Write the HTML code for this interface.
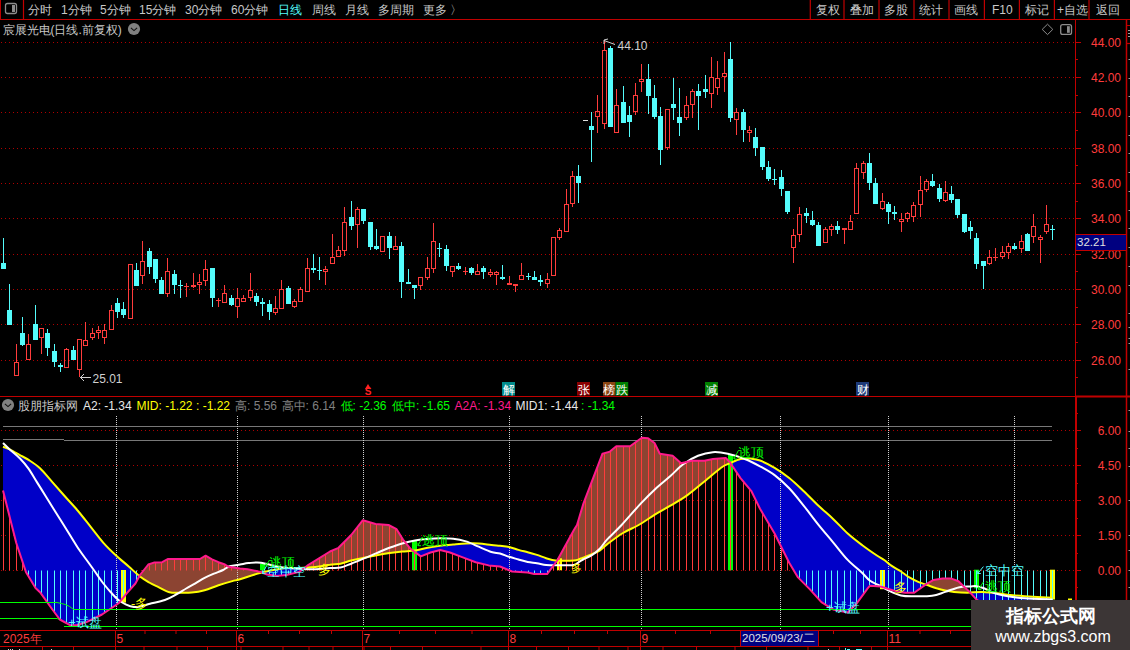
<!DOCTYPE html>
<html><head><meta charset="utf-8"><style>
html,body{margin:0;padding:0;background:#000;width:1130px;height:650px;overflow:hidden}
svg{display:block;font-family:"Liberation Sans",sans-serif}
</style></head><body>
<svg width="1130" height="650" viewBox="0 0 1130 650">
<line x1="1" y1="360.5" x2="1075" y2="360.5" stroke="#b00000" stroke-width="1" stroke-dasharray="1,3"/>
<line x1="1" y1="324.5" x2="1075" y2="324.5" stroke="#b00000" stroke-width="1" stroke-dasharray="1,3"/>
<line x1="1" y1="289.5" x2="1075" y2="289.5" stroke="#b00000" stroke-width="1" stroke-dasharray="1,3"/>
<line x1="1" y1="254.5" x2="1075" y2="254.5" stroke="#b00000" stroke-width="1" stroke-dasharray="1,3"/>
<line x1="1" y1="218.5" x2="1075" y2="218.5" stroke="#b00000" stroke-width="1" stroke-dasharray="1,3"/>
<line x1="1" y1="183.5" x2="1075" y2="183.5" stroke="#b00000" stroke-width="1" stroke-dasharray="1,3"/>
<line x1="1" y1="148.5" x2="1075" y2="148.5" stroke="#b00000" stroke-width="1" stroke-dasharray="1,3"/>
<line x1="1" y1="112.5" x2="1075" y2="112.5" stroke="#b00000" stroke-width="1" stroke-dasharray="1,3"/>
<line x1="1" y1="77.5" x2="1075" y2="77.5" stroke="#b00000" stroke-width="1" stroke-dasharray="1,3"/>
<line x1="1" y1="42.5" x2="1075" y2="42.5" stroke="#b00000" stroke-width="1" stroke-dasharray="1,3"/>
<line x1="1" y1="430.5" x2="1075" y2="430.5" stroke="#b00000" stroke-width="1" stroke-dasharray="1,3"/>
<line x1="1" y1="465.5" x2="1075" y2="465.5" stroke="#b00000" stroke-width="1" stroke-dasharray="1,3"/>
<line x1="1" y1="500.5" x2="1075" y2="500.5" stroke="#b00000" stroke-width="1" stroke-dasharray="1,3"/>
<line x1="1" y1="535.5" x2="1075" y2="535.5" stroke="#b00000" stroke-width="1" stroke-dasharray="1,3"/>
<line x1="1" y1="570.5" x2="1075" y2="570.5" stroke="#b00000" stroke-width="1" stroke-dasharray="1,3"/>
<line x1="3" y1="426.5" x2="1052" y2="426.5" stroke="#787878" stroke-width="1"/>
<line x1="3" y1="439.5" x2="64" y2="439.5" stroke="#787878" stroke-width="1"/>
<line x1="64" y1="440.5" x2="1052" y2="440.5" stroke="#787878" stroke-width="1"/>
<rect x="3" y="238" width="1" height="31" fill="#54fcfc"/>
<rect x="1" y="263" width="5" height="6" fill="#54fcfc"/>
<rect x="9" y="284" width="1" height="41" fill="#54fcfc"/>
<rect x="7" y="310" width="5" height="15" fill="#54fcfc"/>
<rect x="16" y="344" width="1" height="18" fill="#ff3c3c"/>
<rect x="14.5" y="362.5" width="4" height="13" fill="none" stroke="#ff3c3c" stroke-width="1"/>
<rect x="22" y="317" width="1" height="29" fill="#54fcfc"/>
<rect x="20" y="333" width="5" height="12" fill="#54fcfc"/>
<rect x="28" y="334" width="1" height="10" fill="#ff3c3c"/>
<rect x="26.5" y="344.5" width="4" height="15" fill="none" stroke="#ff3c3c" stroke-width="1"/>
<rect x="35" y="305" width="1" height="35" fill="#54fcfc"/>
<rect x="33" y="324" width="5" height="16" fill="#54fcfc"/>
<rect x="41" y="338" width="1" height="16" fill="#ff3c3c"/>
<rect x="39.5" y="328.5" width="4" height="9" fill="none" stroke="#ff3c3c" stroke-width="1"/>
<rect x="47" y="329" width="1" height="27" fill="#54fcfc"/>
<rect x="45" y="333" width="5" height="15" fill="#54fcfc"/>
<rect x="54" y="344" width="1" height="23" fill="#54fcfc"/>
<rect x="52" y="351" width="5" height="11" fill="#54fcfc"/>
<rect x="60" y="363" width="1" height="9" fill="#54fcfc"/>
<rect x="58" y="365" width="5" height="2" fill="#54fcfc"/>
<rect x="66" y="348" width="1" height="1" fill="#ff3c3c"/>
<rect x="64.5" y="349.5" width="4" height="18" fill="none" stroke="#ff3c3c" stroke-width="1"/>
<rect x="73" y="346" width="1" height="14" fill="#54fcfc"/>
<rect x="71" y="350" width="5" height="10" fill="#54fcfc"/>
<rect x="79" y="370" width="1" height="7" fill="#ff3c3c"/>
<rect x="77.5" y="339.5" width="4" height="30" fill="none" stroke="#ff3c3c" stroke-width="1"/>
<rect x="85" y="322" width="1" height="18" fill="#ff3c3c"/>
<rect x="83.5" y="340.5" width="4" height="5" fill="none" stroke="#ff3c3c" stroke-width="1"/>
<rect x="92" y="328" width="1" height="5" fill="#ff3c3c"/>
<rect x="92" y="338" width="1" height="2" fill="#ff3c3c"/>
<rect x="90.5" y="333.5" width="4" height="4" fill="none" stroke="#ff3c3c" stroke-width="1"/>
<rect x="98" y="326" width="1" height="4" fill="#ff3c3c"/>
<rect x="98" y="333" width="1" height="6" fill="#ff3c3c"/>
<rect x="96.5" y="330.5" width="4" height="2" fill="none" stroke="#ff3c3c" stroke-width="1"/>
<rect x="104" y="324" width="1" height="6" fill="#ff3c3c"/>
<rect x="104" y="338" width="1" height="6" fill="#ff3c3c"/>
<rect x="102.5" y="330.5" width="4" height="7" fill="none" stroke="#ff3c3c" stroke-width="1"/>
<rect x="111" y="305" width="1" height="5" fill="#ff3c3c"/>
<rect x="109.5" y="310.5" width="4" height="19" fill="none" stroke="#ff3c3c" stroke-width="1"/>
<rect x="117" y="298" width="1" height="20" fill="#54fcfc"/>
<rect x="115" y="303" width="5" height="9" fill="#54fcfc"/>
<rect x="123" y="302" width="1" height="16" fill="#54fcfc"/>
<rect x="121" y="309" width="5" height="6" fill="#54fcfc"/>
<rect x="128.5" y="264.5" width="4" height="54" fill="none" stroke="#ff3c3c" stroke-width="1"/>
<rect x="136" y="263" width="1" height="23" fill="#54fcfc"/>
<rect x="134" y="270" width="5" height="16" fill="#54fcfc"/>
<rect x="142" y="241" width="1" height="20" fill="#ff3c3c"/>
<rect x="142" y="276" width="1" height="8" fill="#ff3c3c"/>
<rect x="140.5" y="261.5" width="4" height="14" fill="none" stroke="#ff3c3c" stroke-width="1"/>
<rect x="149" y="248" width="1" height="26" fill="#54fcfc"/>
<rect x="147" y="251" width="5" height="16" fill="#54fcfc"/>
<rect x="155" y="259" width="1" height="24" fill="#54fcfc"/>
<rect x="153" y="259" width="5" height="20" fill="#54fcfc"/>
<rect x="161" y="277" width="1" height="17" fill="#54fcfc"/>
<rect x="159" y="280" width="5" height="14" fill="#54fcfc"/>
<rect x="167" y="258" width="1" height="13" fill="#ff3c3c"/>
<rect x="167" y="294" width="1" height="3" fill="#ff3c3c"/>
<rect x="165.5" y="271.5" width="4" height="22" fill="none" stroke="#ff3c3c" stroke-width="1"/>
<rect x="174" y="270" width="1" height="24" fill="#54fcfc"/>
<rect x="172" y="274" width="5" height="11" fill="#54fcfc"/>
<rect x="180" y="280" width="1" height="18" fill="#54fcfc"/>
<rect x="178" y="285" width="5" height="1" fill="#54fcfc"/>
<rect x="186" y="283" width="1" height="3" fill="#ff3c3c"/>
<rect x="186" y="287" width="1" height="10" fill="#ff3c3c"/>
<rect x="184" y="286" width="5" height="1" fill="#ff3c3c"/>
<rect x="193" y="273" width="1" height="12" fill="#ff3c3c"/>
<rect x="193" y="287" width="1" height="1" fill="#ff3c3c"/>
<rect x="191" y="285" width="5" height="2" fill="#ff3c3c"/>
<rect x="199" y="274" width="1" height="8" fill="#ff3c3c"/>
<rect x="199" y="285" width="1" height="9" fill="#ff3c3c"/>
<rect x="197.5" y="282.5" width="4" height="2" fill="none" stroke="#ff3c3c" stroke-width="1"/>
<rect x="205" y="260" width="1" height="9" fill="#ff3c3c"/>
<rect x="205" y="281" width="1" height="5" fill="#ff3c3c"/>
<rect x="203.5" y="269.5" width="4" height="11" fill="none" stroke="#ff3c3c" stroke-width="1"/>
<rect x="212" y="268" width="1" height="39" fill="#54fcfc"/>
<rect x="210" y="268" width="5" height="30" fill="#54fcfc"/>
<rect x="218" y="298" width="1" height="2" fill="#ff3c3c"/>
<rect x="218" y="301" width="1" height="6" fill="#ff3c3c"/>
<rect x="216" y="300" width="5" height="1" fill="#ff3c3c"/>
<rect x="224" y="285" width="1" height="8" fill="#ff3c3c"/>
<rect x="222.5" y="293.5" width="4" height="9" fill="none" stroke="#ff3c3c" stroke-width="1"/>
<rect x="231" y="295" width="1" height="11" fill="#54fcfc"/>
<rect x="229" y="298" width="5" height="7" fill="#54fcfc"/>
<rect x="237" y="288" width="1" height="10" fill="#ff3c3c"/>
<rect x="237" y="307" width="1" height="11" fill="#ff3c3c"/>
<rect x="235.5" y="298.5" width="4" height="8" fill="none" stroke="#ff3c3c" stroke-width="1"/>
<rect x="243" y="295" width="1" height="3" fill="#ff3c3c"/>
<rect x="241.5" y="298.5" width="4" height="3" fill="none" stroke="#ff3c3c" stroke-width="1"/>
<rect x="250" y="273" width="1" height="17" fill="#ff3c3c"/>
<rect x="250" y="298" width="1" height="3" fill="#ff3c3c"/>
<rect x="248.5" y="290.5" width="4" height="7" fill="none" stroke="#ff3c3c" stroke-width="1"/>
<rect x="256" y="293" width="1" height="13" fill="#54fcfc"/>
<rect x="254" y="296" width="5" height="6" fill="#54fcfc"/>
<rect x="262" y="298" width="1" height="18" fill="#54fcfc"/>
<rect x="260" y="302" width="5" height="2" fill="#54fcfc"/>
<rect x="269" y="300" width="1" height="20" fill="#54fcfc"/>
<rect x="267" y="304" width="5" height="8" fill="#54fcfc"/>
<rect x="275" y="296" width="1" height="12" fill="#ff3c3c"/>
<rect x="275" y="313" width="1" height="2" fill="#ff3c3c"/>
<rect x="273.5" y="308.5" width="4" height="4" fill="none" stroke="#ff3c3c" stroke-width="1"/>
<rect x="281" y="280" width="1" height="9" fill="#ff3c3c"/>
<rect x="279.5" y="289.5" width="4" height="19" fill="none" stroke="#ff3c3c" stroke-width="1"/>
<rect x="288" y="286" width="1" height="18" fill="#54fcfc"/>
<rect x="286" y="288" width="5" height="16" fill="#54fcfc"/>
<rect x="294" y="299" width="1" height="2" fill="#ff3c3c"/>
<rect x="294" y="307" width="1" height="1" fill="#ff3c3c"/>
<rect x="292.5" y="301.5" width="4" height="5" fill="none" stroke="#ff3c3c" stroke-width="1"/>
<rect x="300" y="287" width="1" height="2" fill="#ff3c3c"/>
<rect x="298.5" y="289.5" width="4" height="12" fill="none" stroke="#ff3c3c" stroke-width="1"/>
<rect x="307" y="258" width="1" height="10" fill="#ff3c3c"/>
<rect x="305.5" y="268.5" width="4" height="23" fill="none" stroke="#ff3c3c" stroke-width="1"/>
<rect x="313" y="254" width="1" height="19" fill="#54fcfc"/>
<rect x="311" y="268" width="5" height="2" fill="#54fcfc"/>
<rect x="319" y="257" width="1" height="23" fill="#54fcfc"/>
<rect x="317" y="270" width="5" height="1" fill="#54fcfc"/>
<rect x="325" y="266" width="1" height="3" fill="#ff3c3c"/>
<rect x="325" y="272" width="1" height="13" fill="#ff3c3c"/>
<rect x="323.5" y="269.5" width="4" height="2" fill="none" stroke="#ff3c3c" stroke-width="1"/>
<rect x="332" y="234" width="1" height="23" fill="#ff3c3c"/>
<rect x="330.5" y="257.5" width="4" height="6" fill="none" stroke="#ff3c3c" stroke-width="1"/>
<rect x="338" y="246" width="1" height="4" fill="#ff3c3c"/>
<rect x="336.5" y="250.5" width="4" height="6" fill="none" stroke="#ff3c3c" stroke-width="1"/>
<rect x="344" y="207" width="1" height="15" fill="#ff3c3c"/>
<rect x="344" y="251" width="1" height="5" fill="#ff3c3c"/>
<rect x="342.5" y="222.5" width="4" height="28" fill="none" stroke="#ff3c3c" stroke-width="1"/>
<rect x="351" y="201" width="1" height="29" fill="#54fcfc"/>
<rect x="349" y="217" width="5" height="9" fill="#54fcfc"/>
<rect x="357" y="207" width="1" height="2" fill="#ff3c3c"/>
<rect x="357" y="225" width="1" height="23" fill="#ff3c3c"/>
<rect x="355.5" y="209.5" width="4" height="15" fill="none" stroke="#ff3c3c" stroke-width="1"/>
<rect x="363" y="209" width="1" height="15" fill="#54fcfc"/>
<rect x="361" y="209" width="5" height="12" fill="#54fcfc"/>
<rect x="370" y="222" width="1" height="28" fill="#54fcfc"/>
<rect x="368" y="222" width="5" height="25" fill="#54fcfc"/>
<rect x="376" y="229" width="1" height="21" fill="#54fcfc"/>
<rect x="374" y="246" width="5" height="3" fill="#54fcfc"/>
<rect x="380.5" y="236.5" width="4" height="15" fill="none" stroke="#ff3c3c" stroke-width="1"/>
<rect x="389" y="232" width="1" height="27" fill="#54fcfc"/>
<rect x="387" y="236" width="5" height="12" fill="#54fcfc"/>
<rect x="395" y="236" width="1" height="10" fill="#ff3c3c"/>
<rect x="393.5" y="246.5" width="4" height="3" fill="none" stroke="#ff3c3c" stroke-width="1"/>
<rect x="401" y="242" width="1" height="56" fill="#54fcfc"/>
<rect x="399" y="246" width="5" height="36" fill="#54fcfc"/>
<rect x="408" y="269" width="1" height="15" fill="#54fcfc"/>
<rect x="406" y="282" width="5" height="2" fill="#54fcfc"/>
<rect x="414" y="285" width="1" height="14" fill="#54fcfc"/>
<rect x="412" y="285" width="5" height="3" fill="#54fcfc"/>
<rect x="420" y="286" width="1" height="4" fill="#ff3c3c"/>
<rect x="418.5" y="277.5" width="4" height="8" fill="none" stroke="#ff3c3c" stroke-width="1"/>
<rect x="427" y="257" width="1" height="11" fill="#ff3c3c"/>
<rect x="427" y="278" width="1" height="2" fill="#ff3c3c"/>
<rect x="425.5" y="268.5" width="4" height="9" fill="none" stroke="#ff3c3c" stroke-width="1"/>
<rect x="433" y="223" width="1" height="18" fill="#ff3c3c"/>
<rect x="433" y="269" width="1" height="4" fill="#ff3c3c"/>
<rect x="431.5" y="241.5" width="4" height="27" fill="none" stroke="#ff3c3c" stroke-width="1"/>
<rect x="439" y="243" width="1" height="14" fill="#54fcfc"/>
<rect x="437" y="248" width="5" height="1" fill="#54fcfc"/>
<rect x="446" y="245" width="1" height="26" fill="#54fcfc"/>
<rect x="444" y="249" width="5" height="17" fill="#54fcfc"/>
<rect x="452" y="272" width="1" height="5" fill="#ff3c3c"/>
<rect x="450.5" y="266.5" width="4" height="5" fill="none" stroke="#ff3c3c" stroke-width="1"/>
<rect x="458" y="263" width="1" height="7" fill="#54fcfc"/>
<rect x="456" y="266" width="5" height="3" fill="#54fcfc"/>
<rect x="465" y="267" width="1" height="4" fill="#ff3c3c"/>
<rect x="465" y="272" width="1" height="3" fill="#ff3c3c"/>
<rect x="463" y="271" width="5" height="1" fill="#ff3c3c"/>
<rect x="471" y="267" width="1" height="8" fill="#54fcfc"/>
<rect x="469" y="268" width="5" height="5" fill="#54fcfc"/>
<rect x="477" y="264" width="1" height="7" fill="#ff3c3c"/>
<rect x="475.5" y="271.5" width="4" height="3" fill="none" stroke="#ff3c3c" stroke-width="1"/>
<rect x="483" y="266" width="1" height="13" fill="#54fcfc"/>
<rect x="481" y="268" width="5" height="4" fill="#54fcfc"/>
<rect x="490" y="269" width="1" height="3" fill="#ff3c3c"/>
<rect x="490" y="275" width="1" height="2" fill="#ff3c3c"/>
<rect x="488.5" y="272.5" width="4" height="2" fill="none" stroke="#ff3c3c" stroke-width="1"/>
<rect x="496" y="271" width="1" height="1" fill="#ff3c3c"/>
<rect x="496" y="275" width="1" height="10" fill="#ff3c3c"/>
<rect x="494.5" y="272.5" width="4" height="2" fill="none" stroke="#ff3c3c" stroke-width="1"/>
<rect x="502" y="265" width="1" height="15" fill="#54fcfc"/>
<rect x="500" y="277" width="5" height="2" fill="#54fcfc"/>
<rect x="509" y="276" width="1" height="7" fill="#ff3c3c"/>
<rect x="507" y="283" width="5" height="2" fill="#ff3c3c"/>
<rect x="515" y="286" width="1" height="6" fill="#ff3c3c"/>
<rect x="513" y="284" width="5" height="2" fill="#ff3c3c"/>
<rect x="521" y="263" width="1" height="12" fill="#ff3c3c"/>
<rect x="519.5" y="275.5" width="4" height="4" fill="none" stroke="#ff3c3c" stroke-width="1"/>
<rect x="528" y="273" width="1" height="7" fill="#54fcfc"/>
<rect x="526" y="276" width="5" height="1" fill="#54fcfc"/>
<rect x="534" y="271" width="1" height="9" fill="#54fcfc"/>
<rect x="532" y="277" width="5" height="3" fill="#54fcfc"/>
<rect x="540" y="275" width="1" height="11" fill="#54fcfc"/>
<rect x="538" y="280" width="5" height="2" fill="#54fcfc"/>
<rect x="547" y="273" width="1" height="6" fill="#ff3c3c"/>
<rect x="547" y="284" width="1" height="4" fill="#ff3c3c"/>
<rect x="545.5" y="279.5" width="4" height="4" fill="none" stroke="#ff3c3c" stroke-width="1"/>
<rect x="551.5" y="237.5" width="4" height="38" fill="none" stroke="#ff3c3c" stroke-width="1"/>
<rect x="559" y="228" width="1" height="2" fill="#ff3c3c"/>
<rect x="559" y="238" width="1" height="2" fill="#ff3c3c"/>
<rect x="557.5" y="230.5" width="4" height="7" fill="none" stroke="#ff3c3c" stroke-width="1"/>
<rect x="566" y="189" width="1" height="15" fill="#ff3c3c"/>
<rect x="564.5" y="204.5" width="4" height="27" fill="none" stroke="#ff3c3c" stroke-width="1"/>
<rect x="572" y="171" width="1" height="5" fill="#ff3c3c"/>
<rect x="572" y="204" width="1" height="3" fill="#ff3c3c"/>
<rect x="570.5" y="176.5" width="4" height="27" fill="none" stroke="#ff3c3c" stroke-width="1"/>
<rect x="578" y="165" width="1" height="38" fill="#54fcfc"/>
<rect x="576" y="176" width="5" height="7" fill="#54fcfc"/>
<rect x="583" y="120" width="5" height="1" fill="#e0e0e0"/>
<rect x="591" y="112" width="1" height="50" fill="#54fcfc"/>
<rect x="589" y="126" width="5" height="4" fill="#54fcfc"/>
<rect x="597" y="95" width="1" height="16" fill="#ff3c3c"/>
<rect x="597" y="117" width="1" height="16" fill="#ff3c3c"/>
<rect x="595.5" y="111.5" width="4" height="5" fill="none" stroke="#ff3c3c" stroke-width="1"/>
<rect x="604" y="40" width="1" height="10" fill="#ff3c3c"/>
<rect x="604" y="124" width="1" height="5" fill="#ff3c3c"/>
<rect x="602.5" y="50.5" width="4" height="73" fill="none" stroke="#ff3c3c" stroke-width="1"/>
<rect x="610" y="46" width="1" height="81" fill="#54fcfc"/>
<rect x="608" y="48" width="5" height="79" fill="#54fcfc"/>
<rect x="616" y="89" width="1" height="16" fill="#ff3c3c"/>
<rect x="614.5" y="105.5" width="4" height="27" fill="none" stroke="#ff3c3c" stroke-width="1"/>
<rect x="623" y="86" width="1" height="37" fill="#54fcfc"/>
<rect x="621" y="102" width="5" height="21" fill="#54fcfc"/>
<rect x="629" y="106" width="1" height="31" fill="#54fcfc"/>
<rect x="627" y="115" width="5" height="7" fill="#54fcfc"/>
<rect x="635" y="83" width="1" height="12" fill="#ff3c3c"/>
<rect x="635" y="112" width="1" height="3" fill="#ff3c3c"/>
<rect x="633.5" y="95.5" width="4" height="16" fill="none" stroke="#ff3c3c" stroke-width="1"/>
<rect x="641" y="64" width="1" height="15" fill="#ff3c3c"/>
<rect x="641" y="82" width="1" height="10" fill="#ff3c3c"/>
<rect x="639.5" y="79.5" width="4" height="2" fill="none" stroke="#ff3c3c" stroke-width="1"/>
<rect x="648" y="64" width="1" height="50" fill="#54fcfc"/>
<rect x="646" y="79" width="5" height="17" fill="#54fcfc"/>
<rect x="654" y="85" width="1" height="34" fill="#54fcfc"/>
<rect x="652" y="98" width="5" height="19" fill="#54fcfc"/>
<rect x="660" y="107" width="1" height="58" fill="#54fcfc"/>
<rect x="658" y="116" width="5" height="34" fill="#54fcfc"/>
<rect x="667" y="148" width="1" height="2" fill="#ff3c3c"/>
<rect x="665.5" y="109.5" width="4" height="38" fill="none" stroke="#ff3c3c" stroke-width="1"/>
<rect x="673" y="78" width="1" height="42" fill="#54fcfc"/>
<rect x="671" y="104" width="5" height="4" fill="#54fcfc"/>
<rect x="679" y="88" width="1" height="48" fill="#54fcfc"/>
<rect x="677" y="117" width="5" height="6" fill="#54fcfc"/>
<rect x="686" y="96" width="1" height="9" fill="#ff3c3c"/>
<rect x="686" y="118" width="1" height="2" fill="#ff3c3c"/>
<rect x="684.5" y="105.5" width="4" height="12" fill="none" stroke="#ff3c3c" stroke-width="1"/>
<rect x="692" y="89" width="1" height="2" fill="#ff3c3c"/>
<rect x="692" y="105" width="1" height="13" fill="#ff3c3c"/>
<rect x="690.5" y="91.5" width="4" height="13" fill="none" stroke="#ff3c3c" stroke-width="1"/>
<rect x="698" y="84" width="1" height="46" fill="#54fcfc"/>
<rect x="696" y="91" width="5" height="5" fill="#54fcfc"/>
<rect x="705" y="75" width="1" height="23" fill="#54fcfc"/>
<rect x="703" y="89" width="5" height="3" fill="#54fcfc"/>
<rect x="711" y="57" width="1" height="20" fill="#ff3c3c"/>
<rect x="711" y="94" width="1" height="14" fill="#ff3c3c"/>
<rect x="709.5" y="77.5" width="4" height="16" fill="none" stroke="#ff3c3c" stroke-width="1"/>
<rect x="717" y="61" width="1" height="17" fill="#ff3c3c"/>
<rect x="717" y="88" width="1" height="7" fill="#ff3c3c"/>
<rect x="715.5" y="78.5" width="4" height="9" fill="none" stroke="#ff3c3c" stroke-width="1"/>
<rect x="724" y="52" width="1" height="21" fill="#ff3c3c"/>
<rect x="724" y="77" width="1" height="15" fill="#ff3c3c"/>
<rect x="722.5" y="73.5" width="4" height="3" fill="none" stroke="#ff3c3c" stroke-width="1"/>
<rect x="730" y="42" width="1" height="80" fill="#54fcfc"/>
<rect x="728" y="59" width="5" height="59" fill="#54fcfc"/>
<rect x="736" y="108" width="1" height="4" fill="#ff3c3c"/>
<rect x="736" y="120" width="1" height="15" fill="#ff3c3c"/>
<rect x="734.5" y="112.5" width="4" height="7" fill="none" stroke="#ff3c3c" stroke-width="1"/>
<rect x="743" y="109" width="1" height="33" fill="#54fcfc"/>
<rect x="741" y="112" width="5" height="18" fill="#54fcfc"/>
<rect x="749" y="126" width="1" height="4" fill="#ff3c3c"/>
<rect x="749" y="133" width="1" height="9" fill="#ff3c3c"/>
<rect x="747.5" y="130.5" width="4" height="2" fill="none" stroke="#ff3c3c" stroke-width="1"/>
<rect x="755" y="128" width="1" height="28" fill="#54fcfc"/>
<rect x="753" y="137" width="5" height="11" fill="#54fcfc"/>
<rect x="762" y="147" width="1" height="23" fill="#54fcfc"/>
<rect x="760" y="147" width="5" height="20" fill="#54fcfc"/>
<rect x="768" y="161" width="1" height="20" fill="#54fcfc"/>
<rect x="766" y="167" width="5" height="12" fill="#54fcfc"/>
<rect x="774" y="169" width="1" height="16" fill="#54fcfc"/>
<rect x="772" y="179" width="5" height="1" fill="#54fcfc"/>
<rect x="781" y="170" width="1" height="26" fill="#54fcfc"/>
<rect x="779" y="177" width="5" height="12" fill="#54fcfc"/>
<rect x="787" y="191" width="1" height="23" fill="#54fcfc"/>
<rect x="785" y="191" width="5" height="21" fill="#54fcfc"/>
<rect x="793" y="229" width="1" height="6" fill="#ff3c3c"/>
<rect x="793" y="248" width="1" height="15" fill="#ff3c3c"/>
<rect x="791.5" y="235.5" width="4" height="12" fill="none" stroke="#ff3c3c" stroke-width="1"/>
<rect x="799" y="207" width="1" height="7" fill="#ff3c3c"/>
<rect x="799" y="235" width="1" height="7" fill="#ff3c3c"/>
<rect x="797.5" y="214.5" width="4" height="20" fill="none" stroke="#ff3c3c" stroke-width="1"/>
<rect x="806" y="208" width="1" height="15" fill="#54fcfc"/>
<rect x="804" y="213" width="5" height="3" fill="#54fcfc"/>
<rect x="812" y="211" width="1" height="15" fill="#54fcfc"/>
<rect x="810" y="220" width="5" height="5" fill="#54fcfc"/>
<rect x="818" y="222" width="1" height="24" fill="#54fcfc"/>
<rect x="816" y="225" width="5" height="21" fill="#54fcfc"/>
<rect x="825" y="227" width="1" height="2" fill="#ff3c3c"/>
<rect x="823.5" y="229.5" width="4" height="13" fill="none" stroke="#ff3c3c" stroke-width="1"/>
<rect x="831" y="224" width="1" height="2" fill="#ff3c3c"/>
<rect x="831" y="230" width="1" height="6" fill="#ff3c3c"/>
<rect x="829.5" y="226.5" width="4" height="3" fill="none" stroke="#ff3c3c" stroke-width="1"/>
<rect x="837" y="221" width="1" height="13" fill="#54fcfc"/>
<rect x="835" y="226" width="5" height="4" fill="#54fcfc"/>
<rect x="844" y="230" width="1" height="14" fill="#ff3c3c"/>
<rect x="842" y="228" width="5" height="2" fill="#ff3c3c"/>
<rect x="850" y="215" width="1" height="6" fill="#ff3c3c"/>
<rect x="848.5" y="221.5" width="4" height="8" fill="none" stroke="#ff3c3c" stroke-width="1"/>
<rect x="856" y="163" width="1" height="5" fill="#ff3c3c"/>
<rect x="854.5" y="168.5" width="4" height="45" fill="none" stroke="#ff3c3c" stroke-width="1"/>
<rect x="863" y="161" width="1" height="2" fill="#ff3c3c"/>
<rect x="863" y="173" width="1" height="6" fill="#ff3c3c"/>
<rect x="861.5" y="163.5" width="4" height="9" fill="none" stroke="#ff3c3c" stroke-width="1"/>
<rect x="869" y="153" width="1" height="37" fill="#54fcfc"/>
<rect x="867" y="163" width="5" height="20" fill="#54fcfc"/>
<rect x="875" y="178" width="1" height="26" fill="#54fcfc"/>
<rect x="873" y="183" width="5" height="21" fill="#54fcfc"/>
<rect x="882" y="193" width="1" height="8" fill="#ff3c3c"/>
<rect x="882" y="209" width="1" height="1" fill="#ff3c3c"/>
<rect x="880.5" y="201.5" width="4" height="7" fill="none" stroke="#ff3c3c" stroke-width="1"/>
<rect x="888" y="202" width="1" height="22" fill="#54fcfc"/>
<rect x="886" y="204" width="5" height="8" fill="#54fcfc"/>
<rect x="894" y="206" width="1" height="14" fill="#54fcfc"/>
<rect x="892" y="212" width="5" height="2" fill="#54fcfc"/>
<rect x="901" y="213" width="1" height="6" fill="#ff3c3c"/>
<rect x="901" y="222" width="1" height="10" fill="#ff3c3c"/>
<rect x="899.5" y="219.5" width="4" height="2" fill="none" stroke="#ff3c3c" stroke-width="1"/>
<rect x="907" y="212" width="1" height="1" fill="#ff3c3c"/>
<rect x="907" y="219" width="1" height="3" fill="#ff3c3c"/>
<rect x="905.5" y="213.5" width="4" height="5" fill="none" stroke="#ff3c3c" stroke-width="1"/>
<rect x="913" y="202" width="1" height="3" fill="#ff3c3c"/>
<rect x="913" y="217" width="1" height="5" fill="#ff3c3c"/>
<rect x="911.5" y="205.5" width="4" height="11" fill="none" stroke="#ff3c3c" stroke-width="1"/>
<rect x="920" y="176" width="1" height="14" fill="#ff3c3c"/>
<rect x="920" y="205" width="1" height="12" fill="#ff3c3c"/>
<rect x="918.5" y="190.5" width="4" height="14" fill="none" stroke="#ff3c3c" stroke-width="1"/>
<rect x="926" y="179" width="1" height="2" fill="#ff3c3c"/>
<rect x="926" y="190" width="1" height="2" fill="#ff3c3c"/>
<rect x="924.5" y="181.5" width="4" height="8" fill="none" stroke="#ff3c3c" stroke-width="1"/>
<rect x="932" y="174" width="1" height="13" fill="#54fcfc"/>
<rect x="930" y="181" width="5" height="5" fill="#54fcfc"/>
<rect x="939" y="184" width="1" height="18" fill="#54fcfc"/>
<rect x="937" y="188" width="5" height="11" fill="#54fcfc"/>
<rect x="945" y="181" width="1" height="11" fill="#ff3c3c"/>
<rect x="945" y="201" width="1" height="1" fill="#ff3c3c"/>
<rect x="943.5" y="192.5" width="4" height="8" fill="none" stroke="#ff3c3c" stroke-width="1"/>
<rect x="951" y="186" width="1" height="17" fill="#54fcfc"/>
<rect x="949" y="194" width="5" height="6" fill="#54fcfc"/>
<rect x="957" y="199" width="1" height="19" fill="#54fcfc"/>
<rect x="955" y="199" width="5" height="16" fill="#54fcfc"/>
<rect x="964" y="214" width="1" height="19" fill="#54fcfc"/>
<rect x="962" y="214" width="5" height="18" fill="#54fcfc"/>
<rect x="970" y="221" width="1" height="18" fill="#54fcfc"/>
<rect x="968" y="227" width="5" height="4" fill="#54fcfc"/>
<rect x="976" y="233" width="1" height="36" fill="#54fcfc"/>
<rect x="974" y="238" width="5" height="26" fill="#54fcfc"/>
<rect x="983" y="261" width="1" height="28" fill="#54fcfc"/>
<rect x="981" y="261" width="5" height="5" fill="#54fcfc"/>
<rect x="989" y="250" width="1" height="7" fill="#ff3c3c"/>
<rect x="989" y="264" width="1" height="1" fill="#ff3c3c"/>
<rect x="987.5" y="257.5" width="4" height="6" fill="none" stroke="#ff3c3c" stroke-width="1"/>
<rect x="995" y="248" width="1" height="9" fill="#ff3c3c"/>
<rect x="995" y="258" width="1" height="3" fill="#ff3c3c"/>
<rect x="993" y="257" width="5" height="1" fill="#ff3c3c"/>
<rect x="1002" y="246" width="1" height="6" fill="#ff3c3c"/>
<rect x="1002" y="257" width="1" height="2" fill="#ff3c3c"/>
<rect x="1000.5" y="252.5" width="4" height="4" fill="none" stroke="#ff3c3c" stroke-width="1"/>
<rect x="1008" y="243" width="1" height="3" fill="#ff3c3c"/>
<rect x="1008" y="253" width="1" height="6" fill="#ff3c3c"/>
<rect x="1006.5" y="246.5" width="4" height="6" fill="none" stroke="#ff3c3c" stroke-width="1"/>
<rect x="1014" y="243" width="1" height="7" fill="#54fcfc"/>
<rect x="1012" y="246" width="5" height="3" fill="#54fcfc"/>
<rect x="1021" y="235" width="1" height="6" fill="#ff3c3c"/>
<rect x="1021" y="249" width="1" height="4" fill="#ff3c3c"/>
<rect x="1019.5" y="241.5" width="4" height="7" fill="none" stroke="#ff3c3c" stroke-width="1"/>
<rect x="1027" y="233" width="1" height="18" fill="#54fcfc"/>
<rect x="1025" y="234" width="5" height="17" fill="#54fcfc"/>
<rect x="1033" y="214" width="1" height="12" fill="#ff3c3c"/>
<rect x="1033" y="237" width="1" height="6" fill="#ff3c3c"/>
<rect x="1031.5" y="226.5" width="4" height="10" fill="none" stroke="#ff3c3c" stroke-width="1"/>
<rect x="1040" y="235" width="1" height="2" fill="#ff3c3c"/>
<rect x="1040" y="240" width="1" height="23" fill="#ff3c3c"/>
<rect x="1038.5" y="237.5" width="4" height="2" fill="none" stroke="#ff3c3c" stroke-width="1"/>
<rect x="1046" y="205" width="1" height="19" fill="#ff3c3c"/>
<rect x="1046" y="232" width="1" height="2" fill="#ff3c3c"/>
<rect x="1044.5" y="224.5" width="4" height="7" fill="none" stroke="#ff3c3c" stroke-width="1"/>
<rect x="1052" y="225" width="1" height="15" fill="#54fcfc"/>
<rect x="1050" y="229" width="5" height="1" fill="#54fcfc"/>
<g stroke="#d0d0d0" stroke-width="1" fill="none"><line x1="80" y1="377.5" x2="91" y2="377.5"/><polyline points="84,374 80.5,377.5 84,381"/></g>
<text x="92.5" y="382.5" fill="#d0d0d0" font-size="12">25.01</text>
<g stroke="#d0d0d0" stroke-width="1" fill="none"><line x1="604" y1="40.5" x2="615" y2="44.5"/><polyline points="604,44 604,40 608,39"/></g>
<text x="617.5" y="50" fill="#d0d0d0" font-size="12">44.10</text>
<polygon points="365,389 368,384 371,389" fill="#ff2020"/>
<text x="368" y="395" fill="#ff2020" font-size="10" font-weight="bold" text-anchor="middle">S</text>
<rect x="502" y="382" width="13" height="13.5" fill="#008b8b"/>
<text x="508.5" y="393.5" fill="#ffffff" font-size="12" text-anchor="middle">解</text>
<rect x="577" y="382" width="13" height="13.5" fill="#8b0000"/>
<text x="583.5" y="393.5" fill="#ffffff" font-size="12" text-anchor="middle">张</text>
<rect x="603" y="382" width="12.6" height="13.5" fill="#8b4513"/>
<text x="609.3" y="393.5" fill="#ffffff" font-size="12" text-anchor="middle">榜</text>
<rect x="615.6" y="382" width="12.6" height="13.5" fill="#008000"/>
<text x="621.9" y="393.5" fill="#ffffff" font-size="12" text-anchor="middle">跌</text>
<rect x="705" y="382" width="13" height="13.5" fill="#008000"/>
<text x="711.5" y="393.5" fill="#ffffff" font-size="12" text-anchor="middle">减</text>
<rect x="856" y="382" width="13" height="13.5" fill="#1e3a78"/>
<text x="862.5" y="393.5" fill="#ffffff" font-size="12" text-anchor="middle">财</text>
<polygon points="3.0,446.7 3.5,446.9 4.0,447.1 4.5,447.3 5.0,447.5 5.5,447.7 6.0,447.9 6.5,448.1 7.0,448.3 7.5,448.5 8.0,448.7 8.5,448.9 9.0,449.1 9.5,449.3 10.0,449.6 10.5,449.8 11.0,450.1 11.5,450.4 12.0,450.7 12.5,451.0 13.0,451.2 13.5,451.5 14.0,451.8 14.5,452.1 15.0,452.4 15.5,452.6 16.0,452.9 16.5,453.2 17.0,453.5 17.5,453.7 18.0,454.0 18.5,454.3 19.0,454.6 19.5,454.9 20.0,455.1 20.5,455.4 21.0,455.7 21.5,456.0 22.0,456.3 22.5,456.5 23.0,456.8 23.5,457.1 24.0,457.4 24.5,457.7 25.0,457.9 25.5,458.2 26.0,458.5 26.5,458.8 27.0,459.1 27.5,459.4 28.0,459.6 28.5,459.9 29.0,460.2 29.5,460.6 30.0,460.9 30.5,461.3 31.0,461.7 31.5,462.0 32.0,462.4 32.5,462.8 33.0,463.1 33.5,463.5 34.0,463.9 34.5,464.2 35.0,464.6 35.5,465.0 36.0,465.4 36.5,465.7 37.0,466.1 37.5,466.5 38.0,466.8 38.5,467.2 39.0,467.6 39.5,467.9 40.0,468.3 40.5,468.9 41.0,469.4 41.5,470.0 42.0,470.5 42.5,471.1 43.0,471.7 43.5,472.2 44.0,472.8 44.5,473.3 45.0,473.9 45.5,474.5 46.0,475.0 46.5,475.6 47.0,476.1 47.5,476.7 48.0,477.3 48.5,477.8 49.0,478.4 49.5,478.9 50.0,479.5 50.5,480.1 51.0,480.6 51.5,481.2 52.0,481.7 52.5,482.3 53.0,482.9 53.5,483.4 54.0,484.0 54.5,484.6 55.0,485.1 55.5,485.7 56.0,486.3 56.5,486.8 57.0,487.4 57.5,488.0 58.0,488.5 58.5,489.1 59.0,489.7 59.5,490.2 60.0,490.8 60.5,491.4 61.0,491.9 61.5,492.5 62.0,493.1 62.5,493.6 63.0,494.2 63.5,494.8 64.0,495.3 64.5,495.9 65.0,496.4 65.5,497.0 66.0,497.6 66.5,498.1 67.0,498.7 67.5,499.2 68.0,499.8 68.5,500.4 69.0,500.9 69.5,501.5 70.0,502.0 70.5,502.6 71.0,503.1 71.5,503.7 72.0,504.3 72.5,504.8 73.0,505.4 73.5,505.9 74.0,506.5 74.5,507.0 75.0,507.6 75.5,508.2 76.0,508.7 76.5,509.3 77.0,509.8 77.5,510.4 78.0,511.0 78.5,511.6 79.0,512.2 79.5,512.9 80.0,513.5 80.5,514.1 81.0,514.7 81.5,515.4 82.0,516.0 82.5,516.6 83.0,517.2 83.5,517.9 84.0,518.5 84.5,519.1 85.0,519.7 85.5,520.4 86.0,521.0 86.5,521.6 87.0,522.2 87.5,522.9 88.0,523.5 88.5,524.1 89.0,524.7 89.5,525.4 90.0,526.0 90.5,526.6 91.0,527.2 91.5,527.9 92.0,528.5 92.5,529.1 93.0,529.7 93.5,530.4 94.0,531.0 94.5,531.6 95.0,532.3 95.5,532.9 96.0,533.5 96.5,534.1 97.0,534.8 97.5,535.4 98.0,536.0 98.5,536.6 99.0,537.3 99.5,537.9 100.0,538.5 100.5,539.2 101.0,539.8 101.5,540.4 102.0,541.0 102.5,541.7 103.0,542.3 103.5,542.9 104.0,543.4 104.5,543.9 105.0,544.4 105.5,544.9 106.0,545.4 106.5,545.9 107.0,546.4 107.5,546.9 108.0,547.4 108.5,547.9 109.0,548.4 109.5,548.9 110.0,549.4 110.5,549.9 111.0,550.4 111.5,550.9 112.0,551.4 112.5,551.9 113.0,552.4 113.5,552.9 114.0,553.4 114.5,553.9 115.0,554.4 115.5,554.9 116.0,555.4 116.5,555.9 117.0,556.3 117.5,556.7 118.0,557.2 118.5,557.6 119.0,558.0 119.5,558.5 120.0,558.9 120.5,559.4 121.0,559.8 121.5,560.2 122.0,560.7 122.5,561.1 123.0,561.5 123.5,562.0 124.0,562.4 124.5,562.8 125.0,563.3 125.5,563.7 126.0,564.1 126.5,564.6 127.0,565.0 127.5,565.4 128.0,565.9 128.5,566.3 129.0,566.7 129.5,567.2 130.0,567.6 130.5,568.1 131.0,568.5 131.5,569.0 132.0,569.4 132.5,569.8 133.0,570.3 133.5,570.7 134.0,571.2 134.5,571.6 135.0,572.1 135.5,572.5 136.0,572.9 136.5,573.4 137.0,573.8 137.5,574.3 138.0,574.7 138.5,575.2 139.0,575.6 139.5,576.1 139.5,575.9 139.0,576.8 138.5,577.8 138.0,578.7 137.5,579.6 137.0,580.5 136.5,581.5 136.0,582.4 135.5,583.3 135.0,584.0 134.5,584.5 134.0,585.1 133.5,585.7 133.0,586.2 132.5,586.8 132.0,587.4 131.5,587.9 131.0,588.5 130.5,589.1 130.0,589.6 129.5,590.2 129.0,590.8 128.5,591.4 128.0,591.9 127.5,592.5 127.0,593.1 126.5,593.7 126.0,594.3 125.5,594.9 125.0,595.5 124.5,596.2 124.0,596.8 123.5,597.4 123.0,598.0 122.5,598.7 122.0,599.3 121.5,599.9 121.0,600.6 120.5,601.2 120.0,601.8 119.5,602.4 119.0,602.9 118.5,603.2 118.0,603.6 117.5,603.9 117.0,604.3 116.5,604.6 116.0,605.0 115.5,605.3 115.0,605.7 114.5,606.0 114.0,606.3 113.5,606.7 113.0,607.0 112.5,607.4 112.0,607.7 111.5,608.1 111.0,608.4 110.5,608.7 110.0,609.1 109.5,609.4 109.0,609.8 108.5,610.1 108.0,610.4 107.5,610.8 107.0,611.1 106.5,611.5 106.0,611.8 105.5,612.1 105.0,612.5 104.5,612.8 104.0,613.1 103.5,613.5 103.0,613.8 102.5,614.2 102.0,614.5 101.5,614.7 101.0,615.0 100.5,615.2 100.0,615.5 99.5,615.7 99.0,616.0 98.5,616.2 98.0,616.5 97.5,616.7 97.0,617.0 96.5,617.2 96.0,617.5 95.5,617.7 95.0,618.0 94.5,618.2 94.0,618.4 93.5,618.7 93.0,618.9 92.5,619.2 92.0,619.4 91.5,619.7 91.0,619.9 90.5,620.2 90.0,620.4 89.5,620.7 89.0,620.9 88.5,621.2 88.0,621.4 87.5,621.7 87.0,621.9 86.5,622.1 86.0,622.2 85.5,622.4 85.0,622.5 84.5,622.7 84.0,622.8 83.5,623.0 83.0,623.2 82.5,623.3 82.0,623.5 81.5,623.6 81.0,623.8 80.5,624.0 80.0,624.1 79.5,624.3 79.0,624.4 78.5,624.6 78.0,624.7 77.5,624.9 77.0,625.0 76.5,625.1 76.0,625.1 75.5,625.2 75.0,625.2 74.5,625.3 74.0,625.3 73.5,625.4 73.0,625.4 72.5,625.5 72.0,625.5 71.5,625.6 71.0,625.6 70.5,625.3 70.0,625.1 69.5,624.8 69.0,624.5 68.5,624.2 68.0,624.0 67.5,623.7 67.0,623.4 66.5,623.1 66.0,622.9 65.5,622.6 65.0,622.3 64.5,622.1 64.0,621.8 63.5,621.5 63.0,621.2 62.5,621.0 62.0,620.7 61.5,620.4 61.0,620.2 60.5,619.9 60.0,619.6 59.5,619.1 59.0,618.4 58.5,617.7 58.0,617.1 57.5,616.4 57.0,615.7 56.5,615.0 56.0,614.4 55.5,613.7 55.0,613.0 54.5,612.3 54.0,611.7 53.5,611.0 53.0,610.3 52.5,609.6 52.0,608.9 51.5,608.2 51.0,607.5 50.5,606.8 50.0,606.2 49.5,605.5 49.0,604.8 48.5,604.1 48.0,603.4 47.5,602.7 47.0,602.0 46.5,601.3 46.0,600.6 45.5,599.9 45.0,599.2 44.5,598.5 44.0,597.8 43.5,597.1 43.0,596.4 42.5,595.7 42.0,595.0 41.5,594.3 41.0,593.6 40.5,592.9 40.0,592.2 39.5,591.7 39.0,591.3 38.5,590.8 38.0,590.3 37.5,589.9 37.0,589.4 36.5,588.9 36.0,588.5 35.5,588.0 35.0,587.2 34.5,586.3 34.0,585.5 33.5,584.6 33.0,583.8 32.5,583.0 32.0,582.1 31.5,581.3 31.0,580.5 30.5,579.6 30.0,578.8 29.5,577.9 29.0,577.1 28.5,576.3 28.0,575.4 27.5,574.6 27.0,573.7 26.5,572.9 26.0,572.1 25.5,570.7 25.0,569.2 24.5,567.7 24.0,566.2 23.5,564.7 23.0,563.2 22.5,561.7 22.0,560.2 21.5,558.7 21.0,557.2 20.5,555.7 20.0,554.2 19.5,552.7 19.0,551.2 18.5,549.7 18.0,548.2 17.5,546.7 17.0,545.2 16.5,543.7 16.0,542.0 15.5,540.0 15.0,538.0 14.5,536.1 14.0,534.1 13.5,532.1 13.0,530.1 12.5,528.1 12.0,526.1 11.5,524.1 11.0,522.2 10.5,520.2 10.0,518.2 9.5,516.2 9.0,514.2 8.5,512.2 8.0,510.3 7.5,508.3 7.0,506.3 6.5,504.3 6.0,502.3 5.5,500.3 5.0,498.3 4.5,496.4 4.0,494.4 3.5,492.4 3.0,490.4" fill="#0000c8"/>
<polygon points="139.5,576.1 140.0,576.5 140.5,576.8 141.0,577.2 141.5,577.5 142.0,577.8 142.5,578.1 143.0,578.5 143.5,578.8 144.0,579.1 144.5,579.4 145.0,579.8 145.5,580.1 146.0,580.4 146.5,580.7 147.0,581.1 147.5,581.4 148.0,581.7 148.5,582.0 149.0,582.4 149.5,582.6 150.0,582.9 150.5,583.1 151.0,583.4 151.5,583.6 152.0,583.9 152.5,584.1 153.0,584.4 153.5,584.6 154.0,584.9 154.5,585.1 155.0,585.4 155.5,585.6 156.0,585.9 156.5,586.1 157.0,586.4 157.5,586.6 158.0,586.9 158.5,587.1 159.0,587.3 159.5,587.6 160.0,587.8 160.5,588.0 161.0,588.3 161.5,588.5 162.0,588.7 162.5,589.0 163.0,589.2 163.5,589.4 164.0,589.7 164.5,589.9 165.0,590.1 165.5,590.3 166.0,590.6 166.5,590.8 167.0,591.0 167.5,591.3 168.0,591.5 168.5,591.7 169.0,592.0 169.5,592.2 170.0,592.2 170.5,592.3 171.0,592.3 171.5,592.3 172.0,592.3 172.5,592.4 173.0,592.4 173.5,592.4 174.0,592.5 174.5,592.5 175.0,592.5 175.5,592.6 176.0,592.6 176.5,592.6 177.0,592.6 177.5,592.7 178.0,592.7 178.5,592.7 179.0,592.8 179.5,592.8 180.0,592.8 180.5,592.8 181.0,592.8 181.5,592.8 182.0,592.8 182.5,592.8 183.0,592.7 183.5,592.7 184.0,592.7 184.5,592.7 185.0,592.7 185.5,592.7 186.0,592.7 186.5,592.7 187.0,592.7 187.5,592.7 188.0,592.7 188.5,592.7 189.0,592.6 189.5,592.6 190.0,592.6 190.5,592.6 191.0,592.6 191.5,592.6 192.0,592.5 192.5,592.5 193.0,592.4 193.5,592.3 194.0,592.2 194.5,592.1 195.0,592.0 195.5,591.9 196.0,591.8 196.5,591.7 197.0,591.7 197.5,591.6 198.0,591.5 198.5,591.4 199.0,591.3 199.5,591.2 200.0,591.1 200.5,591.0 201.0,590.9 201.5,590.9 202.0,590.8 202.5,590.7 203.0,590.6 203.5,590.5 204.0,590.4 204.5,590.3 205.0,590.2 205.5,590.0 206.0,589.8 206.5,589.6 207.0,589.4 207.5,589.2 208.0,589.1 208.5,588.9 209.0,588.7 209.5,588.5 210.0,588.3 210.5,588.1 211.0,588.0 211.5,587.8 212.0,587.6 212.5,587.4 213.0,587.2 213.5,587.0 214.0,586.9 214.5,586.7 215.0,586.5 215.5,586.3 216.0,586.1 216.5,585.9 217.0,585.8 217.5,585.6 218.0,585.4 218.5,585.2 219.0,585.1 219.5,584.9 220.0,584.8 220.5,584.6 221.0,584.5 221.5,584.3 222.0,584.2 222.5,584.0 223.0,583.9 223.5,583.7 224.0,583.6 224.5,583.4 225.0,583.3 225.5,583.1 226.0,583.0 226.5,582.8 227.0,582.7 227.5,582.5 228.0,582.4 228.5,582.2 229.0,582.1 229.5,581.9 230.0,581.8 230.5,581.6 231.0,581.5 231.5,581.3 232.0,581.2 232.5,581.1 233.0,580.9 233.5,580.8 234.0,580.7 234.5,580.6 235.0,580.4 235.5,580.3 236.0,580.2 236.5,580.1 237.0,579.9 237.5,579.8 238.0,579.7 238.5,579.6 239.0,579.4 239.5,579.3 240.0,579.2 240.5,579.0 241.0,578.9 241.5,578.7 242.0,578.6 242.5,578.4 243.0,578.3 243.5,578.1 244.0,578.0 244.5,577.8 245.0,577.7 245.5,577.5 246.0,577.4 246.5,577.2 247.0,577.1 247.5,576.9 248.0,576.8 248.5,576.6 249.0,576.4 249.5,576.3 250.0,576.1 250.5,576.0 251.0,575.8 251.5,575.7 252.0,575.5 252.5,575.4 253.0,575.2 253.5,575.1 254.0,574.9 254.5,574.8 255.0,574.6 255.5,574.5 256.0,574.3 256.5,574.1 257.0,574.0 257.5,573.8 258.0,573.7 258.5,573.5 259.0,573.4 259.5,573.2 260.0,573.1 260.5,572.9 261.0,572.8 261.5,572.7 262.0,572.6 262.5,572.5 262.5,572.7 262.0,572.5 261.5,572.3 261.0,572.1 260.5,571.9 260.0,571.8 259.5,571.7 259.0,571.6 258.5,571.5 258.0,571.4 257.5,571.3 257.0,571.2 256.5,571.1 256.0,571.0 255.5,570.9 255.0,570.8 254.5,570.7 254.0,570.6 253.5,570.5 253.0,570.4 252.5,570.3 252.0,570.2 251.5,570.1 251.0,570.0 250.5,569.9 250.0,569.8 249.5,569.7 249.0,569.6 248.5,569.5 248.0,569.4 247.5,569.3 247.0,569.2 246.5,569.2 246.0,569.2 245.5,569.1 245.0,569.1 244.5,569.0 244.0,569.0 243.5,568.9 243.0,568.9 242.5,568.8 242.0,568.8 241.5,568.7 241.0,568.7 240.5,568.6 240.0,568.6 239.5,568.5 239.0,568.4 238.5,568.4 238.0,568.3 237.5,568.2 237.0,568.1 236.5,568.0 236.0,568.0 235.5,567.9 235.0,567.8 234.5,567.7 234.0,567.7 233.5,567.6 233.0,567.5 232.5,567.4 232.0,567.3 231.5,567.3 231.0,567.2 230.5,567.1 230.0,567.0 229.5,566.9 229.0,566.9 228.5,566.7 228.0,566.4 227.5,566.1 227.0,565.8 226.5,565.5 226.0,565.1 225.5,564.8 225.0,564.5 224.5,564.3 224.0,564.1 223.5,564.0 223.0,563.8 222.5,563.6 222.0,563.4 221.5,563.3 221.0,563.1 220.5,562.9 220.0,562.7 219.5,562.6 219.0,562.4 218.5,562.2 218.0,562.0 217.5,561.8 217.0,561.6 216.5,561.3 216.0,561.1 215.5,560.9 215.0,560.7 214.5,560.5 214.0,560.3 213.5,560.0 213.0,559.8 212.5,559.6 212.0,559.4 211.5,559.1 211.0,558.8 210.5,558.5 210.0,558.2 209.5,558.0 209.0,557.7 208.5,557.4 208.0,557.1 207.5,556.8 207.0,556.5 206.5,556.2 206.0,555.9 205.5,555.8 205.0,556.1 204.5,556.3 204.0,556.6 203.5,556.9 203.0,557.2 202.5,557.5 202.0,557.8 201.5,558.1 201.0,558.4 200.5,558.7 200.0,559.0 199.5,559.0 199.0,559.0 198.5,559.0 198.0,559.0 197.5,559.0 197.0,559.0 196.5,559.0 196.0,559.0 195.5,559.0 195.0,559.0 194.5,559.0 194.0,559.0 193.5,559.0 193.0,559.0 192.5,559.0 192.0,559.0 191.5,559.0 191.0,559.0 190.5,559.0 190.0,559.0 189.5,559.0 189.0,559.0 188.5,559.0 188.0,559.0 187.5,559.0 187.0,559.0 186.5,559.0 186.0,559.0 185.5,559.0 185.0,559.0 184.5,559.0 184.0,559.0 183.5,559.0 183.0,559.0 182.5,559.0 182.0,559.0 181.5,559.0 181.0,559.0 180.5,559.0 180.0,559.0 179.5,559.0 179.0,559.0 178.5,559.0 178.0,559.0 177.5,559.0 177.0,559.0 176.5,559.0 176.0,559.0 175.5,559.0 175.0,559.0 174.5,559.0 174.0,559.0 173.5,559.0 173.0,559.0 172.5,559.0 172.0,559.0 171.5,559.0 171.0,559.0 170.5,559.0 170.0,559.0 169.5,559.0 169.0,559.0 168.5,559.0 168.0,559.0 167.5,559.1 167.0,559.4 166.5,559.7 166.0,560.0 165.5,560.3 165.0,560.6 164.5,560.9 164.0,561.2 163.5,561.4 163.0,561.7 162.5,562.0 162.0,562.2 161.5,562.2 161.0,562.3 160.5,562.3 160.0,562.3 159.5,562.3 159.0,562.4 158.5,562.4 158.0,562.4 157.5,562.4 157.0,562.5 156.5,562.5 156.0,562.5 155.5,562.5 155.0,562.5 154.5,562.6 154.0,562.6 153.5,562.7 153.0,562.9 152.5,563.1 152.0,563.2 151.5,563.4 151.0,563.6 150.5,563.8 150.0,563.9 149.5,564.1 149.0,564.3 148.5,564.4 148.0,564.9 147.5,565.5 147.0,566.1 146.5,566.8 146.0,567.4 145.5,568.0 145.0,568.7 144.5,569.3 144.0,569.9 143.5,570.6 143.0,571.2 142.5,571.8 142.0,572.5 141.5,573.1 141.0,573.7 140.5,574.4 140.0,575.0 139.5,575.9" fill="#8c4432"/>
<polygon points="262.5,572.5 263.0,572.4 263.5,572.3 264.0,572.2 264.5,572.1 265.0,572.0 265.5,571.9 266.0,571.8 266.5,571.7 267.0,571.6 267.5,571.5 268.0,571.4 268.5,571.3 269.0,571.2 269.5,571.1 270.0,571.0 270.5,570.9 271.0,570.8 271.5,570.7 272.0,570.6 272.5,570.5 273.0,570.4 273.5,570.3 274.0,570.2 274.5,570.2 275.0,570.1 275.5,570.0 276.0,569.9 276.5,569.8 277.0,569.7 277.5,569.6 278.0,569.5 278.5,569.4 279.0,569.3 279.5,569.2 280.0,569.1 280.5,569.0 281.0,568.9 281.5,568.8 282.0,568.7 282.5,568.6 283.0,568.5 283.5,568.4 284.0,568.3 284.5,568.3 285.0,568.3 285.5,568.3 286.0,568.3 286.5,568.3 287.0,568.2 287.5,568.2 288.0,568.2 288.5,568.2 289.0,568.2 289.5,568.2 290.0,568.2 290.5,568.2 291.0,568.2 291.5,568.2 292.0,568.1 292.5,568.1 293.0,568.1 293.5,568.1 294.0,568.1 294.5,568.1 295.0,568.1 295.5,568.1 296.0,568.1 296.5,568.1 297.0,568.0 297.5,568.0 298.0,568.0 298.5,568.0 299.0,568.0 299.5,568.0 300.0,568.0 300.5,567.9 301.0,567.9 301.5,567.9 302.0,567.8 302.5,567.8 303.0,567.8 303.5,567.7 304.0,567.7 304.5,567.7 305.0,567.6 305.0,567.5 304.5,567.9 304.0,568.3 303.5,568.6 303.0,569.0 302.5,569.4 302.0,569.8 301.5,570.2 301.0,570.6 300.5,571.0 300.0,571.4 299.5,571.7 299.0,572.0 298.5,572.1 298.0,572.2 297.5,572.3 297.0,572.5 296.5,572.6 296.0,572.7 295.5,572.8 295.0,572.9 294.5,573.1 294.0,573.2 293.5,573.3 293.0,573.4 292.5,573.5 292.0,573.7 291.5,573.8 291.0,573.9 290.5,574.0 290.0,574.1 289.5,574.3 289.0,574.4 288.5,574.5 288.0,574.6 287.5,574.7 287.0,574.9 286.5,575.0 286.0,575.0 285.5,575.1 285.0,575.1 284.5,575.2 284.0,575.2 283.5,575.3 283.0,575.4 282.5,575.4 282.0,575.5 281.5,575.5 281.0,575.6 280.5,575.6 280.0,575.7 279.5,575.7 279.0,575.8 278.5,575.8 278.0,575.9 277.5,575.9 277.0,576.0 276.5,576.0 276.0,575.9 275.5,575.8 275.0,575.7 274.5,575.7 274.0,575.6 273.5,575.5 273.0,575.4 272.5,575.4 272.0,575.3 271.5,575.2 271.0,575.1 270.5,575.0 270.0,575.0 269.5,574.9 269.0,574.8 268.5,574.7 268.0,574.7 267.5,574.6 267.0,574.5 266.5,574.3 266.0,574.1 265.5,573.9 265.0,573.7 264.5,573.5 264.0,573.3 263.5,573.1 263.0,572.9 262.5,572.7" fill="#0000c8"/>
<polygon points="305.0,567.6 305.5,567.6 306.0,567.6 306.5,567.6 307.0,567.5 307.5,567.5 308.0,567.5 308.5,567.4 309.0,567.4 309.5,567.4 310.0,567.3 310.5,567.3 311.0,567.3 311.5,567.2 312.0,567.2 312.5,567.2 313.0,567.1 313.5,567.1 314.0,567.1 314.5,567.1 315.0,567.0 315.5,567.0 316.0,566.9 316.5,566.8 317.0,566.8 317.5,566.7 318.0,566.6 318.5,566.5 319.0,566.5 319.5,566.4 320.0,566.3 320.5,566.2 321.0,566.2 321.5,566.1 322.0,566.0 322.5,565.9 323.0,565.9 323.5,565.8 324.0,565.7 324.5,565.6 325.0,565.6 325.5,565.5 326.0,565.4 326.5,565.3 327.0,565.3 327.5,565.2 328.0,565.1 328.5,565.0 329.0,565.0 329.5,564.9 330.0,564.8 330.5,564.7 331.0,564.7 331.5,564.6 332.0,564.6 332.5,564.5 333.0,564.5 333.5,564.4 334.0,564.4 334.5,564.3 335.0,564.3 335.5,564.2 336.0,564.2 336.5,564.1 337.0,564.1 337.5,564.0 338.0,564.0 338.5,563.9 339.0,563.9 339.5,563.8 340.0,563.8 340.5,563.7 341.0,563.6 341.5,563.4 342.0,563.3 342.5,563.1 343.0,563.0 343.5,562.8 344.0,562.7 344.5,562.5 345.0,562.4 345.5,562.2 346.0,562.1 346.5,561.9 347.0,561.8 347.5,561.6 348.0,561.5 348.5,561.3 349.0,561.2 349.5,561.0 350.0,560.9 350.5,560.7 351.0,560.6 351.5,560.4 352.0,560.3 352.5,560.2 353.0,560.1 353.5,560.0 354.0,559.9 354.5,559.8 355.0,559.7 355.5,559.6 356.0,559.5 356.5,559.4 357.0,559.3 357.5,559.2 358.0,559.1 358.5,559.0 359.0,558.9 359.5,558.7 360.0,558.6 360.5,558.5 361.0,558.4 361.5,558.3 362.0,558.2 362.5,558.1 363.0,558.0 363.5,557.9 364.0,557.8 364.5,557.7 365.0,557.6 365.5,557.5 366.0,557.4 366.5,557.3 367.0,557.2 367.5,557.1 368.0,557.0 368.5,556.9 369.0,556.8 369.5,556.7 370.0,556.6 370.5,556.5 371.0,556.4 371.5,556.3 372.0,556.2 372.5,556.1 373.0,556.0 373.5,555.9 374.0,555.8 374.5,555.7 375.0,555.5 375.5,555.4 376.0,555.3 376.5,555.2 377.0,555.2 377.5,555.1 378.0,555.0 378.5,554.9 379.0,554.8 379.5,554.7 380.0,554.7 380.5,554.6 381.0,554.5 381.5,554.4 382.0,554.3 382.5,554.2 383.0,554.2 383.5,554.1 384.0,554.0 384.5,553.9 385.0,553.8 385.5,553.8 386.0,553.7 386.5,553.6 387.0,553.5 387.5,553.4 388.0,553.3 388.5,553.3 389.0,553.2 389.5,553.1 390.0,553.0 390.5,553.0 391.0,552.9 391.5,552.9 392.0,552.8 392.5,552.7 393.0,552.7 393.5,552.6 394.0,552.6 394.5,552.5 395.0,552.5 395.5,552.4 396.0,552.3 396.5,552.3 397.0,552.2 397.5,552.2 398.0,552.1 398.5,552.0 399.0,552.0 399.5,551.9 400.0,551.9 400.5,551.8 401.0,551.7 401.5,551.7 402.0,551.6 402.5,551.6 403.0,551.5 403.5,551.5 404.0,551.5 404.5,551.4 405.0,551.4 405.5,551.3 406.0,551.3 406.5,551.3 407.0,551.2 407.5,551.2 408.0,551.1 408.5,551.1 409.0,551.1 409.5,551.0 410.0,551.0 410.5,551.0 411.0,550.9 411.5,550.9 412.0,550.8 412.5,550.8 413.0,550.8 413.5,550.7 413.5,551.1 413.0,550.7 412.5,550.4 412.0,550.0 411.5,549.7 411.0,549.3 410.5,548.7 410.0,548.1 409.5,547.5 409.0,546.9 408.5,546.3 408.0,545.7 407.5,545.1 407.0,544.5 406.5,543.8 406.0,543.2 405.5,542.6 405.0,542.0 404.5,541.4 404.0,540.8 403.5,540.2 403.0,539.6 402.5,538.8 402.0,538.0 401.5,537.2 401.0,536.4 400.5,535.5 400.0,534.7 399.5,533.9 399.0,533.1 398.5,532.3 398.0,531.5 397.5,530.7 397.0,529.9 396.5,529.1 396.0,528.9 395.5,528.6 395.0,528.4 394.5,528.1 394.0,527.9 393.5,527.6 393.0,527.3 392.5,527.1 392.0,526.8 391.5,526.6 391.0,526.3 390.5,526.0 390.0,525.8 389.5,525.5 389.0,525.3 388.5,525.0 388.0,525.0 387.5,524.9 387.0,524.9 386.5,524.8 386.0,524.8 385.5,524.8 385.0,524.7 384.5,524.7 384.0,524.7 383.5,524.6 383.0,524.6 382.5,524.5 382.0,524.5 381.5,524.5 381.0,524.4 380.5,524.4 380.0,524.3 379.5,524.3 379.0,524.3 378.5,524.2 378.0,524.2 377.5,524.1 377.0,524.1 376.5,524.1 376.0,524.0 375.5,524.0 375.0,523.8 374.5,523.7 374.0,523.5 373.5,523.4 373.0,523.2 372.5,523.1 372.0,522.9 371.5,522.8 371.0,522.6 370.5,522.5 370.0,522.3 369.5,522.2 369.0,522.0 368.5,521.9 368.0,521.7 367.5,521.6 367.0,521.4 366.5,521.3 366.0,521.1 365.5,521.0 365.0,520.8 364.5,520.7 364.0,520.5 363.5,520.4 363.0,520.2 362.5,520.7 362.0,521.3 361.5,522.0 361.0,522.6 360.5,523.2 360.0,523.9 359.5,524.5 359.0,525.1 358.5,525.8 358.0,526.4 357.5,527.0 357.0,527.7 356.5,528.3 356.0,528.9 355.5,529.6 355.0,530.2 354.5,530.8 354.0,531.5 353.5,532.1 353.0,532.7 352.5,533.4 352.0,534.0 351.5,534.6 351.0,535.2 350.5,535.7 350.0,536.2 349.5,536.7 349.0,537.2 348.5,537.7 348.0,538.2 347.5,538.7 347.0,539.2 346.5,539.7 346.0,540.2 345.5,540.7 345.0,541.2 344.5,541.8 344.0,542.3 343.5,542.8 343.0,543.3 342.5,543.8 342.0,544.3 341.5,544.8 341.0,545.3 340.5,545.8 340.0,546.3 339.5,546.8 339.0,547.3 338.5,547.8 338.0,548.0 337.5,548.2 337.0,548.5 336.5,548.7 336.0,548.9 335.5,549.1 335.0,549.3 334.5,549.5 334.0,549.8 333.5,550.0 333.0,550.2 332.5,550.4 332.0,550.6 331.5,550.8 331.0,551.1 330.5,551.3 330.0,551.5 329.5,551.8 329.0,552.1 328.5,552.4 328.0,552.8 327.5,553.1 327.0,553.4 326.5,553.7 326.0,554.0 325.5,554.3 325.0,554.6 324.5,554.9 324.0,555.3 323.5,555.6 323.0,555.9 322.5,556.2 322.0,556.5 321.5,556.8 321.0,557.1 320.5,557.4 320.0,557.8 319.5,558.1 319.0,558.4 318.5,558.7 318.0,559.0 317.5,559.3 317.0,559.6 316.5,559.9 316.0,560.3 315.5,560.6 315.0,560.9 314.5,561.2 314.0,561.5 313.5,561.8 313.0,562.1 312.5,562.4 312.0,562.8 311.5,563.1 311.0,563.4 310.5,563.7 310.0,564.0 309.5,564.3 309.0,564.6 308.5,564.9 308.0,565.3 307.5,565.6 307.0,565.9 306.5,566.3 306.0,566.7 305.5,567.1 305.0,567.5" fill="#8c4432"/>
<polygon points="413.5,550.7 414.0,550.7 414.5,550.6 415.0,550.6 415.5,550.5 416.0,550.4 416.5,550.3 417.0,550.2 417.5,550.0 418.0,549.9 418.5,549.8 419.0,549.7 419.5,549.6 420.0,549.5 420.5,549.4 421.0,549.3 421.5,549.2 422.0,549.1 422.5,548.9 423.0,548.8 423.5,548.7 424.0,548.6 424.5,548.5 425.0,548.4 425.5,548.3 426.0,548.2 426.5,548.1 427.0,548.0 427.5,547.8 428.0,547.8 428.5,547.7 429.0,547.6 429.5,547.5 430.0,547.4 430.5,547.3 431.0,547.3 431.5,547.2 432.0,547.1 432.5,547.0 433.0,546.9 433.5,546.8 434.0,546.8 434.5,546.7 435.0,546.6 435.5,546.5 436.0,546.4 436.5,546.4 437.0,546.3 437.5,546.2 438.0,546.1 438.5,546.0 439.0,545.9 439.5,545.9 440.0,545.8 440.5,545.7 441.0,545.7 441.5,545.6 442.0,545.6 442.5,545.5 443.0,545.5 443.5,545.4 444.0,545.4 444.5,545.4 445.0,545.3 445.5,545.3 446.0,545.2 446.5,545.2 447.0,545.1 447.5,545.1 448.0,545.1 448.5,545.0 449.0,545.0 449.5,544.9 450.0,544.9 450.5,544.8 451.0,544.8 451.5,544.7 452.0,544.7 452.5,544.7 453.0,544.6 453.5,544.6 454.0,544.5 454.5,544.5 455.0,544.4 455.5,544.4 456.0,544.4 456.5,544.3 457.0,544.3 457.5,544.2 458.0,544.2 458.5,544.1 459.0,544.1 459.5,544.1 460.0,544.0 460.5,544.0 461.0,543.9 461.5,543.9 462.0,543.8 462.5,543.8 463.0,543.8 463.5,543.7 464.0,543.7 464.5,543.6 465.0,543.6 465.5,543.5 466.0,543.5 466.5,543.5 467.0,543.5 467.5,543.5 468.0,543.5 468.5,543.5 469.0,543.5 469.5,543.5 470.0,543.5 470.5,543.5 471.0,543.5 471.5,543.5 472.0,543.5 472.5,543.5 473.0,543.5 473.5,543.5 474.0,543.5 474.5,543.5 475.0,543.5 475.5,543.5 476.0,543.5 476.5,543.5 477.0,543.5 477.5,543.5 478.0,543.5 478.5,543.5 479.0,543.5 479.5,543.6 480.0,543.7 480.5,543.7 481.0,543.8 481.5,543.8 482.0,543.9 482.5,543.9 483.0,544.0 483.5,544.1 484.0,544.1 484.5,544.2 485.0,544.2 485.5,544.3 486.0,544.4 486.5,544.4 487.0,544.5 487.5,544.5 488.0,544.6 488.5,544.7 489.0,544.7 489.5,544.8 490.0,544.8 490.5,544.9 491.0,545.0 491.5,545.0 492.0,545.0 492.5,545.1 493.0,545.1 493.5,545.2 494.0,545.2 494.5,545.3 495.0,545.3 495.5,545.3 496.0,545.4 496.5,545.4 497.0,545.5 497.5,545.5 498.0,545.5 498.5,545.6 499.0,545.6 499.5,545.7 500.0,545.7 500.5,545.8 501.0,545.9 501.5,545.9 502.0,546.0 502.5,546.1 503.0,546.2 503.5,546.2 504.0,546.3 504.5,546.4 505.0,546.5 505.5,546.5 506.0,546.6 506.5,546.7 507.0,546.8 507.5,546.8 508.0,546.9 508.5,547.0 509.0,547.1 509.5,547.2 510.0,547.3 510.5,547.5 511.0,547.6 511.5,547.8 512.0,547.9 512.5,548.1 513.0,548.2 513.5,548.4 514.0,548.5 514.5,548.7 515.0,548.8 515.5,549.0 516.0,549.1 516.5,549.3 517.0,549.4 517.5,549.6 518.0,549.7 518.5,549.9 519.0,550.0 519.5,550.1 520.0,550.3 520.5,550.4 521.0,550.5 521.5,550.6 522.0,550.8 522.5,550.9 523.0,551.0 523.5,551.1 524.0,551.3 524.5,551.4 525.0,551.5 525.5,551.6 526.0,551.8 526.5,551.9 527.0,552.0 527.5,552.1 528.0,552.3 528.5,552.4 529.0,552.6 529.5,552.7 530.0,552.9 530.5,553.0 531.0,553.2 531.5,553.3 532.0,553.5 532.5,553.6 533.0,553.8 533.5,553.9 534.0,554.0 534.5,554.2 535.0,554.3 535.5,554.5 536.0,554.6 536.5,554.8 537.0,554.9 537.5,555.1 538.0,555.3 538.5,555.5 539.0,555.6 539.5,555.8 540.0,556.0 540.5,556.2 541.0,556.4 541.5,556.5 542.0,556.7 542.5,556.9 543.0,557.1 543.5,557.2 544.0,557.4 544.5,557.6 545.0,557.8 545.5,558.0 546.0,558.1 546.5,558.3 547.0,558.4 547.5,558.5 548.0,558.6 548.5,558.8 549.0,558.9 549.5,559.0 550.0,559.1 550.5,559.3 551.0,559.4 551.5,559.5 552.0,559.6 552.5,559.8 553.0,559.9 553.5,560.0 554.0,560.1 554.5,560.3 555.0,560.4 555.5,560.5 556.0,560.5 556.5,560.5 557.0,560.6 557.5,560.6 557.5,560.0 557.0,560.8 556.5,561.4 556.0,562.1 555.5,562.8 555.0,563.5 554.5,564.1 554.0,564.8 553.5,565.5 553.0,566.2 552.5,566.8 552.0,567.5 551.5,568.2 551.0,568.8 550.5,569.5 550.0,570.2 549.5,570.9 549.0,571.5 548.5,572.2 548.0,572.9 547.5,573.6 547.0,574.1 546.5,574.1 546.0,574.1 545.5,574.1 545.0,574.1 544.5,574.1 544.0,574.1 543.5,574.0 543.0,574.0 542.5,574.0 542.0,574.0 541.5,574.0 541.0,574.0 540.5,574.0 540.0,574.0 539.5,574.0 539.0,574.0 538.5,574.0 538.0,574.0 537.5,574.0 537.0,573.9 536.5,573.9 536.0,573.9 535.5,573.9 535.0,573.9 534.5,573.9 534.0,573.9 533.5,573.7 533.0,573.6 532.5,573.5 532.0,573.4 531.5,573.3 531.0,573.2 530.5,573.1 530.0,573.0 529.5,572.9 529.0,572.8 528.5,572.7 528.0,572.6 527.5,572.5 527.0,572.5 526.5,572.4 526.0,572.4 525.5,572.4 525.0,572.3 524.5,572.3 524.0,572.3 523.5,572.2 523.0,572.2 522.5,572.2 522.0,572.1 521.5,572.1 521.0,572.1 520.5,572.0 520.0,572.0 519.5,572.0 519.0,571.9 518.5,571.9 518.0,571.9 517.5,571.9 517.0,571.8 516.5,571.8 516.0,571.8 515.5,571.7 515.0,571.7 514.5,571.7 514.0,571.6 513.5,571.6 513.0,571.6 512.5,571.5 512.0,571.5 511.5,571.3 511.0,571.1 510.5,570.9 510.0,570.7 509.5,570.5 509.0,570.2 508.5,570.0 508.0,569.8 507.5,569.6 507.0,569.4 506.5,569.2 506.0,569.0 505.5,568.8 505.0,568.6 504.5,568.4 504.0,568.2 503.5,568.0 503.0,567.8 502.5,567.5 502.0,567.3 501.5,567.1 501.0,566.9 500.5,566.7 500.0,566.5 499.5,566.5 499.0,566.4 498.5,566.4 498.0,566.3 497.5,566.3 497.0,566.2 496.5,566.2 496.0,566.1 495.5,566.1 495.0,566.0 494.5,566.0 494.0,565.9 493.5,565.9 493.0,565.8 492.5,565.8 492.0,565.7 491.5,565.7 491.0,565.6 490.5,565.6 490.0,565.5 489.5,565.5 489.0,565.4 488.5,565.4 488.0,565.2 487.5,565.1 487.0,565.0 486.5,564.9 486.0,564.7 485.5,564.6 485.0,564.5 484.5,564.4 484.0,564.2 483.5,564.1 483.0,564.0 482.5,563.9 482.0,563.8 481.5,563.6 481.0,563.5 480.5,563.4 480.0,563.3 479.5,563.1 479.0,563.0 478.5,562.9 478.0,562.8 477.5,562.6 477.0,562.5 476.5,562.4 476.0,562.3 475.5,562.1 475.0,561.9 474.5,561.8 474.0,561.6 473.5,561.4 473.0,561.2 472.5,561.0 472.0,560.8 471.5,560.6 471.0,560.5 470.5,560.3 470.0,560.1 469.5,559.9 469.0,559.7 468.5,559.5 468.0,559.3 467.5,559.1 467.0,559.0 466.5,558.8 466.0,558.6 465.5,558.4 465.0,558.2 464.5,558.0 464.0,557.8 463.5,557.7 463.0,557.5 462.5,557.3 462.0,557.1 461.5,556.9 461.0,556.7 460.5,556.5 460.0,556.3 459.5,556.1 459.0,555.9 458.5,555.8 458.0,555.6 457.5,555.4 457.0,555.2 456.5,555.0 456.0,554.8 455.5,554.6 455.0,554.4 454.5,554.2 454.0,554.0 453.5,553.8 453.0,553.6 452.5,553.5 452.0,553.3 451.5,553.1 451.0,552.9 450.5,552.7 450.0,552.5 449.5,552.4 449.0,552.2 448.5,552.1 448.0,552.0 447.5,551.9 447.0,551.7 446.5,551.6 446.0,551.5 445.5,551.4 445.0,551.2 444.5,551.1 444.0,551.0 443.5,550.8 443.0,550.7 442.5,550.6 442.0,550.5 441.5,550.3 441.0,550.2 440.5,550.1 440.0,550.1 439.5,550.2 439.0,550.3 438.5,550.4 438.0,550.6 437.5,550.7 437.0,550.8 436.5,551.0 436.0,551.1 435.5,551.2 435.0,551.3 434.5,551.5 434.0,551.6 433.5,551.7 433.0,551.9 432.5,552.0 432.0,552.1 431.5,552.2 431.0,552.4 430.5,552.5 430.0,552.7 429.5,552.9 429.0,553.1 428.5,553.3 428.0,553.5 427.5,553.7 427.0,553.9 426.5,554.1 426.0,554.3 425.5,554.5 425.0,554.7 424.5,554.9 424.0,555.1 423.5,555.3 423.0,555.5 422.5,555.7 422.0,555.9 421.5,556.1 421.0,556.3 420.5,556.2 420.0,555.8 419.5,555.5 419.0,555.1 418.5,554.7 418.0,554.4 417.5,554.0 417.0,553.6 416.5,553.3 416.0,552.9 415.5,552.6 415.0,552.2 414.5,551.8 414.0,551.5 413.5,551.1" fill="#0000c8"/>
<polygon points="557.5,560.6 558.0,560.6 558.5,560.6 559.0,560.6 559.5,560.6 560.0,560.6 560.5,560.7 561.0,560.7 561.5,560.7 562.0,560.7 562.5,560.7 563.0,560.7 563.5,560.8 564.0,560.8 564.5,560.8 565.0,560.8 565.5,560.8 566.0,560.8 566.5,560.7 567.0,560.7 567.5,560.7 568.0,560.7 568.5,560.7 569.0,560.7 569.5,560.6 570.0,560.6 570.5,560.6 571.0,560.6 571.5,560.6 572.0,560.6 572.5,560.5 573.0,560.5 573.5,560.5 574.0,560.5 574.5,560.4 575.0,560.3 575.5,560.2 576.0,560.0 576.5,559.9 577.0,559.8 577.5,559.7 578.0,559.6 578.5,559.5 579.0,559.3 579.5,559.1 580.0,558.9 580.5,558.7 581.0,558.5 581.5,558.3 582.0,558.1 582.5,557.9 583.0,557.7 583.5,557.5 584.0,557.3 584.5,557.1 585.0,556.9 585.5,556.7 586.0,556.5 586.5,556.3 587.0,556.1 587.5,555.9 588.0,555.7 588.5,555.5 589.0,555.3 589.5,555.1 590.0,554.9 590.5,554.7 591.0,554.5 591.5,554.3 592.0,554.1 592.5,553.9 593.0,553.7 593.5,553.4 594.0,553.2 594.5,552.9 595.0,552.7 595.5,552.5 596.0,552.2 596.5,552.0 597.0,551.7 597.5,551.5 598.0,551.3 598.5,551.0 599.0,550.8 599.5,550.5 600.0,550.3 600.5,549.9 601.0,549.5 601.5,549.0 602.0,548.6 602.5,548.2 603.0,547.8 603.5,547.3 604.0,546.9 604.5,546.5 605.0,546.1 605.5,545.7 606.0,545.2 606.5,544.8 607.0,544.4 607.5,544.0 608.0,543.7 608.5,543.3 609.0,543.0 609.5,542.6 610.0,542.3 610.5,541.9 611.0,541.5 611.5,541.2 612.0,540.8 612.5,540.5 613.0,540.1 613.5,539.8 614.0,539.4 614.5,539.1 615.0,538.7 615.5,538.3 616.0,538.0 616.5,537.6 617.0,537.3 617.5,536.9 618.0,536.6 618.5,536.2 619.0,535.9 619.5,535.5 620.0,535.1 620.5,534.8 621.0,534.4 621.5,534.1 622.0,533.7 622.5,533.4 623.0,533.0 623.5,532.7 624.0,532.5 624.5,532.2 625.0,532.0 625.5,531.7 626.0,531.5 626.5,531.2 627.0,530.9 627.5,530.7 628.0,530.4 628.5,530.2 629.0,529.9 629.5,529.7 630.0,529.4 630.5,529.2 631.0,528.9 631.5,528.6 632.0,528.4 632.5,528.1 633.0,527.9 633.5,527.6 634.0,527.4 634.5,527.1 635.0,526.8 635.5,526.6 636.0,526.3 636.5,526.1 637.0,525.8 637.5,525.6 638.0,525.3 638.5,525.1 639.0,524.7 639.5,524.4 640.0,524.1 640.5,523.8 641.0,523.5 641.5,523.2 642.0,522.8 642.5,522.5 643.0,522.2 643.5,521.9 644.0,521.6 644.5,521.3 645.0,520.9 645.5,520.6 646.0,520.3 646.5,520.0 647.0,519.7 647.5,519.3 648.0,519.0 648.5,518.7 649.0,518.4 649.5,518.1 650.0,517.8 650.5,517.4 651.0,517.1 651.5,516.8 652.0,516.5 652.5,516.2 653.0,515.9 653.5,515.5 654.0,515.2 654.5,514.9 655.0,514.6 655.5,514.3 656.0,514.0 656.5,513.7 657.0,513.4 657.5,513.1 658.0,512.8 658.5,512.5 659.0,512.2 659.5,512.0 660.0,511.7 660.5,511.4 661.0,511.1 661.5,510.8 662.0,510.5 662.5,510.2 663.0,510.0 663.5,509.7 664.0,509.4 664.5,509.1 665.0,508.8 665.5,508.5 666.0,508.2 666.5,507.9 667.0,507.7 667.5,507.4 668.0,507.1 668.5,506.8 669.0,506.5 669.5,506.2 670.0,505.9 670.5,505.6 671.0,505.3 671.5,505.0 672.0,504.7 672.5,504.4 673.0,504.1 673.5,503.8 674.0,503.5 674.5,503.1 675.0,502.8 675.5,502.5 676.0,502.2 676.5,501.9 677.0,501.6 677.5,501.3 678.0,501.0 678.5,500.6 679.0,500.3 679.5,500.0 680.0,499.7 680.5,499.4 681.0,499.1 681.5,498.8 682.0,498.5 682.5,498.2 683.0,497.8 683.5,497.5 684.0,497.2 684.5,496.9 685.0,496.6 685.5,496.3 686.0,496.0 686.5,495.7 687.0,495.3 687.5,495.0 688.0,494.6 688.5,494.2 689.0,493.8 689.5,493.4 690.0,493.0 690.5,492.6 691.0,492.2 691.5,491.8 692.0,491.4 692.5,491.0 693.0,490.6 693.5,490.2 694.0,489.8 694.5,489.4 695.0,489.0 695.5,488.6 696.0,488.2 696.5,487.8 697.0,487.4 697.5,487.0 698.0,486.6 698.5,486.2 699.0,485.8 699.5,485.4 700.0,485.0 700.5,484.6 701.0,484.2 701.5,483.8 702.0,483.4 702.5,483.0 703.0,482.6 703.5,482.2 704.0,481.8 704.5,481.4 705.0,481.0 705.5,480.6 706.0,480.2 706.5,479.8 707.0,479.4 707.5,478.9 708.0,478.5 708.5,478.1 709.0,477.7 709.5,477.3 710.0,476.9 710.5,476.5 711.0,476.1 711.5,475.7 712.0,475.2 712.5,474.8 713.0,474.4 713.5,474.0 714.0,473.6 714.5,473.2 715.0,472.8 715.5,472.4 716.0,471.9 716.5,471.5 717.0,471.1 717.5,470.7 718.0,470.3 718.5,469.9 719.0,469.5 719.5,469.1 720.0,468.7 720.5,468.2 721.0,467.8 721.5,467.4 722.0,467.2 722.5,466.9 723.0,466.7 723.5,466.4 724.0,466.2 724.5,465.9 725.0,465.7 725.5,465.4 726.0,465.2 726.5,464.9 727.0,464.7 727.5,464.4 728.0,464.2 728.5,463.9 729.0,463.7 729.5,463.4 730.0,463.2 730.5,463.0 730.5,463.1 730.0,462.4 729.5,461.8 729.0,461.3 728.5,460.8 728.0,460.3 727.5,459.7 727.0,459.2 726.5,458.7 726.0,458.2 725.5,457.9 725.0,458.0 724.5,458.0 724.0,458.0 723.5,458.1 723.0,458.1 722.5,458.2 722.0,458.2 721.5,458.3 721.0,458.3 720.5,458.4 720.0,458.4 719.5,458.4 719.0,458.5 718.5,458.5 718.0,458.6 717.5,458.6 717.0,458.7 716.5,458.7 716.0,458.7 715.5,458.8 715.0,458.8 714.5,458.9 714.0,458.9 713.5,459.0 713.0,459.0 712.5,459.1 712.0,459.2 711.5,459.3 711.0,459.4 710.5,459.5 710.0,459.6 709.5,459.7 709.0,459.8 708.5,459.9 708.0,460.0 707.5,460.1 707.0,460.2 706.5,460.3 706.0,460.4 705.5,460.5 705.0,460.6 704.5,460.7 704.0,460.7 703.5,460.7 703.0,460.7 702.5,460.7 702.0,460.7 701.5,460.7 701.0,460.7 700.5,460.7 700.0,460.7 699.5,460.7 699.0,460.7 698.5,460.7 698.0,460.7 697.5,460.7 697.0,460.7 696.5,460.7 696.0,460.7 695.5,460.7 695.0,460.7 694.5,460.7 694.0,460.7 693.5,460.7 693.0,460.7 692.5,460.7 692.0,460.7 691.5,460.7 691.0,460.9 690.5,461.0 690.0,461.1 689.5,461.2 689.0,461.3 688.5,461.5 688.0,461.6 687.5,461.7 687.0,461.8 686.5,461.9 686.0,462.0 685.5,462.2 685.0,462.3 684.5,462.4 684.0,462.5 683.5,462.6 683.0,462.8 682.5,462.9 682.0,463.0 681.5,463.1 681.0,463.1 680.5,462.7 680.0,462.2 679.5,461.8 679.0,461.4 678.5,460.9 678.0,460.5 677.5,460.1 677.0,459.6 676.5,459.2 676.0,458.8 675.5,458.3 675.0,457.9 674.5,457.5 674.0,457.0 673.5,456.6 673.0,456.1 672.5,455.8 672.0,455.7 671.5,455.6 671.0,455.5 670.5,455.5 670.0,455.4 669.5,455.3 669.0,455.2 668.5,455.1 668.0,455.0 667.5,455.0 667.0,454.9 666.5,454.8 666.0,454.7 665.5,454.6 665.0,454.6 664.5,454.5 664.0,454.4 663.5,454.3 663.0,454.2 662.5,454.1 662.0,454.1 661.5,454.0 661.0,453.9 660.5,453.8 660.0,453.7 659.5,453.1 659.0,452.1 658.5,451.1 658.0,450.1 657.5,449.1 657.0,448.0 656.5,447.0 656.0,446.0 655.5,445.0 655.0,444.0 654.5,443.0 654.0,442.6 653.5,442.2 653.0,441.9 652.5,441.5 652.0,441.1 651.5,440.8 651.0,440.4 650.5,440.0 650.0,439.6 649.5,439.2 649.0,438.9 648.5,438.5 648.0,438.2 647.5,438.2 647.0,438.1 646.5,438.1 646.0,438.0 645.5,438.0 645.0,438.0 644.5,437.9 644.0,437.9 643.5,437.8 643.0,437.8 642.5,437.8 642.0,437.7 641.5,437.9 641.0,438.3 640.5,438.6 640.0,439.0 639.5,439.4 639.0,439.7 638.5,440.1 638.0,440.5 637.5,440.8 637.0,441.2 636.5,441.6 636.0,441.9 635.5,442.3 635.0,442.6 634.5,443.0 634.0,443.4 633.5,443.7 633.0,444.1 632.5,444.5 632.0,444.8 631.5,445.2 631.0,445.5 630.5,445.9 630.0,446.2 629.5,446.2 629.0,446.2 628.5,446.2 628.0,446.2 627.5,446.2 627.0,446.2 626.5,446.2 626.0,446.2 625.5,446.2 625.0,446.2 624.5,446.2 624.0,446.2 623.5,446.2 623.0,446.2 622.5,446.2 622.0,446.2 621.5,446.2 621.0,446.2 620.5,446.2 620.0,446.2 619.5,446.2 619.0,446.2 618.5,446.2 618.0,446.2 617.5,446.2 617.0,446.2 616.5,446.2 616.0,446.5 615.5,446.9 615.0,447.3 614.5,447.7 614.0,448.1 613.5,448.6 613.0,449.0 612.5,449.4 612.0,449.8 611.5,450.2 611.0,450.7 610.5,451.1 610.0,451.5 609.5,451.7 609.0,451.9 608.5,452.0 608.0,452.1 607.5,452.3 607.0,452.4 606.5,452.6 606.0,452.7 605.5,452.8 605.0,453.0 604.5,453.1 604.0,453.3 603.5,453.4 603.0,453.6 602.5,453.7 602.0,455.0 601.5,456.3 601.0,457.6 600.5,458.9 600.0,460.2 599.5,461.5 599.0,462.8 598.5,464.2 598.0,465.5 597.5,466.8 597.0,468.1 596.5,469.4 596.0,470.7 595.5,472.0 595.0,473.3 594.5,474.6 594.0,475.9 593.5,477.2 593.0,478.5 592.5,479.8 592.0,481.1 591.5,482.4 591.0,483.7 590.5,485.1 590.0,486.4 589.5,487.7 589.0,489.0 588.5,490.3 588.0,491.6 587.5,492.9 587.0,494.2 586.5,495.5 586.0,496.8 585.5,498.1 585.0,499.4 584.5,500.7 584.0,502.0 583.5,503.3 583.0,504.9 582.5,506.6 582.0,508.3 581.5,510.0 581.0,511.6 580.5,513.3 580.0,515.0 579.5,516.6 579.0,518.3 578.5,520.0 578.0,521.7 577.5,523.3 577.0,525.0 576.5,525.8 576.0,526.6 575.5,527.4 575.0,528.2 574.5,529.0 574.0,529.8 573.5,530.7 573.0,531.6 572.5,532.6 572.0,533.5 571.5,534.4 571.0,535.3 570.5,536.2 570.0,537.1 569.5,538.0 569.0,538.9 568.5,539.9 568.0,540.8 567.5,541.7 567.0,542.6 566.5,543.5 566.0,544.4 565.5,545.3 565.0,546.3 564.5,547.2 564.0,548.1 563.5,549.0 563.0,549.9 562.5,550.8 562.0,551.7 561.5,552.6 561.0,553.6 560.5,554.5 560.0,555.4 559.5,556.3 559.0,557.2 558.5,558.1 558.0,559.0 557.5,560.0" fill="#8c4432"/>
<polygon points="730.5,463.0 731.0,462.8 731.5,462.6 732.0,462.4 732.5,462.2 733.0,462.0 733.5,461.8 734.0,461.6 734.5,461.4 735.0,461.2 735.5,461.0 736.0,460.8 736.5,460.6 737.0,460.4 737.5,460.2 738.0,460.0 738.5,459.8 739.0,459.6 739.5,459.4 740.0,459.2 740.5,459.0 741.0,459.0 741.5,459.0 742.0,458.9 742.5,458.9 743.0,458.9 743.5,458.9 744.0,458.9 744.5,458.9 745.0,458.8 745.5,458.8 746.0,458.8 746.5,458.8 747.0,458.8 747.5,458.7 748.0,458.7 748.5,458.7 749.0,458.7 749.5,458.7 750.0,458.6 750.5,458.6 751.0,458.6 751.5,458.7 752.0,458.8 752.5,458.9 753.0,459.0 753.5,459.1 754.0,459.2 754.5,459.3 755.0,459.4 755.5,459.5 756.0,459.6 756.5,459.7 757.0,459.9 757.5,460.0 758.0,460.1 758.5,460.2 759.0,460.3 759.5,460.4 760.0,460.5 760.5,460.8 761.0,461.0 761.5,461.2 762.0,461.5 762.5,461.8 763.0,462.0 763.5,462.2 764.0,462.5 764.5,462.8 765.0,463.0 765.5,463.2 766.0,463.5 766.5,463.8 767.0,464.0 767.5,464.2 768.0,464.5 768.5,464.8 769.0,465.0 769.5,465.2 770.0,465.5 770.5,465.8 771.0,466.0 771.5,466.2 772.0,466.5 772.5,466.8 773.0,467.0 773.5,467.2 774.0,467.5 774.5,467.8 775.0,468.1 775.5,468.4 776.0,468.8 776.5,469.1 777.0,469.5 777.5,469.8 778.0,470.2 778.5,470.5 779.0,470.9 779.5,471.2 780.0,471.6 780.5,471.9 781.0,472.3 781.5,472.6 782.0,473.0 782.5,473.3 783.0,473.7 783.5,474.0 784.0,474.4 784.5,474.7 785.0,475.1 785.5,475.4 786.0,475.8 786.5,476.1 787.0,476.5 787.5,476.8 788.0,477.2 788.5,477.5 789.0,477.9 789.5,478.3 790.0,478.7 790.5,479.2 791.0,479.6 791.5,480.1 792.0,480.5 792.5,481.0 793.0,481.4 793.5,481.9 794.0,482.3 794.5,482.8 795.0,483.2 795.5,483.7 796.0,484.1 796.5,484.6 797.0,485.1 797.5,485.5 798.0,486.0 798.5,486.4 799.0,486.9 799.5,487.3 800.0,487.8 800.5,488.2 801.0,488.7 801.5,489.1 802.0,489.6 802.5,490.0 803.0,490.5 803.5,490.9 804.0,491.4 804.5,491.9 805.0,492.4 805.5,492.9 806.0,493.4 806.5,493.9 807.0,494.4 807.5,494.9 808.0,495.4 808.5,495.9 809.0,496.4 809.5,496.9 810.0,497.4 810.5,497.9 811.0,498.4 811.5,498.8 812.0,499.3 812.5,499.8 813.0,500.3 813.5,500.8 814.0,501.3 814.5,501.8 815.0,502.3 815.5,502.8 816.0,503.3 816.5,503.8 817.0,504.3 817.5,504.8 818.0,505.3 818.5,505.8 819.0,506.2 819.5,506.7 820.0,507.1 820.5,507.6 821.0,508.0 821.5,508.5 822.0,508.9 822.5,509.4 823.0,509.8 823.5,510.3 824.0,510.7 824.5,511.2 825.0,511.6 825.5,512.1 826.0,512.5 826.5,513.0 827.0,513.4 827.5,513.9 828.0,514.3 828.5,514.8 829.0,515.2 829.5,515.7 830.0,516.1 830.5,516.6 831.0,517.0 831.5,517.5 832.0,517.9 832.5,518.4 833.0,518.8 833.5,519.3 834.0,519.8 834.5,520.3 835.0,520.8 835.5,521.3 836.0,521.8 836.5,522.3 837.0,522.8 837.5,523.3 838.0,523.8 838.5,524.3 839.0,524.8 839.5,525.3 840.0,525.8 840.5,526.3 841.0,526.8 841.5,527.3 842.0,527.8 842.5,528.3 843.0,528.8 843.5,529.3 844.0,529.8 844.5,530.3 845.0,530.8 845.5,531.3 846.0,531.8 846.5,532.3 847.0,532.8 847.5,533.3 848.0,533.7 848.5,534.1 849.0,534.5 849.5,534.9 850.0,535.3 850.5,535.7 851.0,536.1 851.5,536.5 852.0,536.9 852.5,537.3 853.0,537.7 853.5,538.1 854.0,538.5 854.5,538.9 855.0,539.4 855.5,539.8 856.0,540.2 856.5,540.6 857.0,541.0 857.5,541.4 858.0,541.8 858.5,542.2 859.0,542.6 859.5,543.0 860.0,543.4 860.5,543.8 861.0,544.2 861.5,544.6 862.0,545.0 862.5,545.3 863.0,545.7 863.5,546.0 864.0,546.4 864.5,546.8 865.0,547.1 865.5,547.5 866.0,547.8 866.5,548.2 867.0,548.5 867.5,548.9 868.0,549.2 868.5,549.6 869.0,549.9 869.5,550.3 870.0,550.6 870.5,551.0 871.0,551.3 871.5,551.7 872.0,552.0 872.5,552.4 873.0,552.7 873.5,553.1 874.0,553.5 874.5,553.8 875.0,554.2 875.5,554.5 876.0,554.9 876.5,555.2 877.0,555.6 877.5,555.9 878.0,556.2 878.5,556.5 879.0,556.8 879.5,557.1 880.0,557.4 880.5,557.7 881.0,558.0 881.5,558.3 882.0,558.6 882.5,559.0 883.0,559.3 883.5,559.6 884.0,559.9 884.5,560.2 885.0,560.6 885.5,561.0 886.0,561.4 886.5,561.8 887.0,562.2 887.5,562.6 888.0,563.0 888.5,563.4 889.0,563.8 889.5,564.2 890.0,564.6 890.5,564.9 891.0,565.3 891.5,565.7 892.0,566.1 892.5,566.4 893.0,566.7 893.5,567.0 894.0,567.3 894.5,567.6 895.0,567.9 895.5,568.2 896.0,568.5 896.5,568.8 897.0,569.1 897.5,569.4 898.0,569.7 898.5,570.0 899.0,570.3 899.5,570.6 900.0,570.9 900.5,571.2 901.0,571.5 901.5,571.9 902.0,572.2 902.5,572.6 903.0,572.9 903.5,573.3 904.0,573.6 904.5,574.0 905.0,574.3 905.5,574.7 906.0,575.0 906.5,575.4 907.0,575.7 907.5,576.1 908.0,576.4 908.5,576.8 909.0,577.1 909.5,577.5 910.0,577.8 910.5,578.0 911.0,578.3 911.5,578.5 912.0,578.8 912.5,579.0 913.0,579.3 913.5,579.5 914.0,579.8 914.5,580.0 915.0,580.3 915.5,580.5 916.0,580.8 916.5,581.0 917.0,581.3 917.5,581.5 918.0,581.8 918.5,582.0 919.0,582.2 919.5,582.4 920.0,582.5 920.5,582.7 921.0,582.9 921.5,583.1 922.0,583.2 922.5,583.4 923.0,583.6 923.5,583.7 924.0,583.9 924.5,584.1 925.0,584.3 925.5,584.4 926.0,584.6 926.0,584.3 925.5,584.7 925.0,585.0 924.5,585.4 924.0,585.7 923.5,586.1 923.0,586.5 922.5,586.8 922.0,587.2 921.5,587.5 921.0,587.9 920.5,588.2 920.0,588.6 919.5,588.9 919.0,589.3 918.5,589.6 918.0,590.0 917.5,590.4 917.0,590.7 916.5,591.1 916.0,591.4 915.5,591.8 915.0,592.1 914.5,592.5 914.0,592.7 913.5,592.7 913.0,592.7 912.5,592.7 912.0,592.7 911.5,592.7 911.0,592.7 910.5,592.7 910.0,592.7 909.5,592.7 909.0,592.7 908.5,592.7 908.0,592.7 907.5,592.7 907.0,592.7 906.5,592.7 906.0,592.7 905.5,592.7 905.0,592.6 904.5,592.6 904.0,592.5 903.5,592.4 903.0,592.3 902.5,592.3 902.0,592.2 901.5,592.1 901.0,592.1 900.5,592.0 900.0,591.9 899.5,591.8 899.0,591.8 898.5,591.7 898.0,591.6 897.5,591.5 897.0,591.5 896.5,591.4 896.0,591.3 895.5,591.1 895.0,591.0 894.5,590.8 894.0,590.7 893.5,590.5 893.0,590.4 892.5,590.2 892.0,590.1 891.5,589.9 891.0,589.8 890.5,589.6 890.0,589.5 889.5,589.3 889.0,589.2 888.5,589.0 888.0,588.9 887.5,588.7 887.0,588.6 886.5,588.4 886.0,588.2 885.5,588.1 885.0,587.9 884.5,587.8 884.0,587.6 883.5,587.4 883.0,587.3 882.5,587.1 882.0,587.0 881.5,586.8 881.0,586.6 880.5,586.5 880.0,586.5 879.5,586.4 879.0,586.4 878.5,586.3 878.0,586.3 877.5,586.3 877.0,586.2 876.5,586.2 876.0,586.2 875.5,586.1 875.0,586.1 874.5,586.0 874.0,586.0 873.5,586.0 873.0,585.9 872.5,585.9 872.0,585.9 871.5,585.8 871.0,585.8 870.5,585.7 870.0,585.7 869.5,586.2 869.0,586.8 868.5,587.3 868.0,587.9 867.5,588.6 867.0,589.3 866.5,589.9 866.0,590.6 865.5,591.3 865.0,592.0 864.5,592.7 864.0,593.4 863.5,594.1 863.0,594.8 862.5,595.4 862.0,596.1 861.5,596.8 861.0,597.5 860.5,598.2 860.0,598.9 859.5,599.6 859.0,600.3 858.5,600.9 858.0,601.6 857.5,602.3 857.0,603.0 856.5,603.7 856.0,604.2 855.5,604.7 855.0,605.2 854.5,605.7 854.0,606.2 853.5,606.7 853.0,607.2 852.5,607.7 852.0,608.2 851.5,608.7 851.0,609.2 850.5,609.7 850.0,610.2 849.5,610.7 849.0,611.2 848.5,611.7 848.0,612.2 847.5,612.5 847.0,612.4 846.5,612.3 846.0,612.2 845.5,612.0 845.0,611.9 844.5,611.8 844.0,611.7 843.5,611.6 843.0,611.5 842.5,611.4 842.0,611.3 841.5,611.2 841.0,611.1 840.5,611.0 840.0,610.9 839.5,610.8 839.0,610.7 838.5,610.6 838.0,610.5 837.5,610.4 837.0,610.3 836.5,610.2 836.0,610.1 835.5,610.0 835.0,609.9 834.5,609.8 834.0,609.7 833.5,609.6 833.0,609.4 832.5,609.1 832.0,608.8 831.5,608.5 831.0,608.2 830.5,607.9 830.0,607.6 829.5,607.3 829.0,606.9 828.5,606.6 828.0,606.3 827.5,606.0 827.0,605.7 826.5,605.4 826.0,605.1 825.5,604.8 825.0,604.4 824.5,604.1 824.0,603.8 823.5,603.5 823.0,603.2 822.5,602.9 822.0,602.6 821.5,602.3 821.0,601.8 820.5,601.2 820.0,600.6 819.5,600.1 819.0,599.5 818.5,599.0 818.0,598.4 817.5,597.8 817.0,597.3 816.5,596.7 816.0,596.2 815.5,595.6 815.0,595.0 814.5,594.5 814.0,593.9 813.5,593.4 813.0,592.8 812.5,592.2 812.0,591.7 811.5,591.1 811.0,590.6 810.5,590.0 810.0,589.4 809.5,588.9 809.0,588.4 808.5,587.9 808.0,587.4 807.5,586.9 807.0,586.4 806.5,585.9 806.0,585.4 805.5,584.9 805.0,584.4 804.5,583.9 804.0,583.4 803.5,582.9 803.0,582.4 802.5,581.9 802.0,581.4 801.5,580.9 801.0,580.4 800.5,579.9 800.0,579.4 799.5,578.9 799.0,578.4 798.5,577.9 798.0,577.4 797.5,576.6 797.0,575.7 796.5,574.9 796.0,574.1 795.5,573.3 795.0,572.4 794.5,571.6 794.0,570.8 793.5,569.9 793.0,569.1 792.5,568.3 792.0,567.4 791.5,566.6 791.0,565.8 790.5,565.0 790.0,564.1 789.5,563.3 789.0,562.4 788.5,561.4 788.0,560.4 787.5,559.4 787.0,558.4 786.5,557.4 786.0,556.4 785.5,555.4 785.0,554.4 784.5,553.4 784.0,552.4 783.5,551.4 783.0,550.4 782.5,549.4 782.0,548.4 781.5,547.3 781.0,546.3 780.5,545.3 780.0,544.3 779.5,543.3 779.0,542.3 778.5,541.3 778.0,540.3 777.5,539.3 777.0,538.3 776.5,537.3 776.0,536.3 775.5,535.3 775.0,534.3 774.5,533.3 774.0,532.5 773.5,531.6 773.0,530.8 772.5,529.9 772.0,529.1 771.5,528.2 771.0,527.4 770.5,526.5 770.0,525.7 769.5,524.8 769.0,524.0 768.5,523.1 768.0,522.3 767.5,521.4 767.0,520.6 766.5,519.7 766.0,518.9 765.5,518.0 765.0,517.2 764.5,516.3 764.0,515.5 763.5,514.6 763.0,513.8 762.5,512.9 762.0,512.1 761.5,511.2 761.0,510.4 760.5,509.5 760.0,508.7 759.5,507.7 759.0,506.7 758.5,505.6 758.0,504.6 757.5,503.6 757.0,502.6 756.5,501.6 756.0,500.6 755.5,499.5 755.0,498.5 754.5,497.5 754.0,496.5 753.5,495.5 753.0,494.5 752.5,493.4 752.0,492.4 751.5,491.4 751.0,490.6 750.5,490.0 750.0,489.4 749.5,488.8 749.0,488.2 748.5,487.6 748.0,487.0 747.5,486.4 747.0,485.8 746.5,485.2 746.0,484.6 745.5,484.0 745.0,483.4 744.5,482.8 744.0,482.3 743.5,481.7 743.0,481.1 742.5,480.5 742.0,479.9 741.5,479.3 741.0,478.7 740.5,478.1 740.0,477.4 739.5,476.6 739.0,475.9 738.5,475.1 738.0,474.4 737.5,473.6 737.0,472.9 736.5,472.1 736.0,471.4 735.5,470.6 735.0,469.9 734.5,469.1 734.0,468.4 733.5,467.6 733.0,466.9 732.5,466.1 732.0,465.4 731.5,464.6 731.0,463.9 730.5,463.1" fill="#0000c8"/>
<polygon points="926.0,584.6 926.5,584.8 927.0,584.9 927.5,585.1 928.0,585.3 928.5,585.5 929.0,585.7 929.5,585.8 930.0,586.0 930.5,586.2 931.0,586.4 931.5,586.5 932.0,586.7 932.5,586.9 933.0,587.1 933.5,587.3 934.0,587.4 934.5,587.6 935.0,587.8 935.5,588.0 936.0,588.2 936.5,588.3 937.0,588.4 937.5,588.6 938.0,588.7 938.5,588.8 939.0,588.9 939.5,589.1 940.0,589.2 940.5,589.3 941.0,589.4 941.5,589.6 942.0,589.7 942.5,589.8 943.0,589.9 943.5,590.1 944.0,590.2 944.5,590.3 945.0,590.4 945.5,590.5 946.0,590.6 946.5,590.7 947.0,590.8 947.5,590.9 948.0,590.9 948.5,591.0 949.0,591.1 949.5,591.2 950.0,591.3 950.5,591.3 951.0,591.4 951.5,591.5 952.0,591.6 952.5,591.7 953.0,591.7 953.5,591.8 954.0,591.9 954.5,591.9 955.0,592.0 955.5,592.0 956.0,592.0 956.5,592.1 957.0,592.1 957.5,592.1 958.0,592.1 958.5,592.2 959.0,592.2 959.5,592.2 960.0,592.3 960.5,592.3 961.0,592.3 961.5,592.4 962.0,592.4 962.5,592.4 963.0,592.4 963.5,592.5 964.0,592.5 964.5,592.5 965.0,592.6 965.5,592.6 966.0,592.6 966.5,592.7 967.0,592.7 967.5,592.7 968.0,592.7 968.5,592.6 969.0,592.6 969.5,592.6 970.0,592.6 970.5,592.5 970.5,592.9 970.0,592.3 969.5,591.8 969.0,591.4 968.5,590.9 968.0,590.4 967.5,590.0 967.0,589.5 966.5,589.0 966.0,588.6 965.5,588.1 965.0,587.6 964.5,587.2 964.0,586.7 963.5,586.2 963.0,585.7 962.5,585.2 962.0,584.7 961.5,584.2 961.0,583.7 960.5,583.2 960.0,582.7 959.5,582.2 959.0,581.7 958.5,581.2 958.0,581.0 957.5,580.8 957.0,580.7 956.5,580.5 956.0,580.3 955.5,580.1 955.0,579.9 954.5,579.7 954.0,579.6 953.5,579.4 953.0,579.2 952.5,579.0 952.0,578.8 951.5,578.6 951.0,578.6 950.5,578.6 950.0,578.6 949.5,578.6 949.0,578.6 948.5,578.6 948.0,578.6 947.5,578.6 947.0,578.6 946.5,578.6 946.0,578.6 945.5,578.6 945.0,578.6 944.5,578.6 944.0,578.6 943.5,578.6 943.0,578.6 942.5,578.6 942.0,578.7 941.5,578.8 941.0,578.8 940.5,578.9 940.0,579.0 939.5,579.1 939.0,579.1 938.5,579.2 938.0,579.3 937.5,579.3 937.0,579.4 936.5,579.5 936.0,579.6 935.5,579.6 935.0,579.7 934.5,579.8 934.0,579.9 933.5,580.0 933.0,580.3 932.5,580.6 932.0,580.9 931.5,581.1 931.0,581.4 930.5,581.7 930.0,582.0 929.5,582.3 929.0,582.5 928.5,582.8 928.0,583.1 927.5,583.4 927.0,583.7 926.5,584.0 926.0,584.3" fill="#8c4432"/>
<polygon points="970.5,592.5 971.0,592.5 971.5,592.5 972.0,592.5 972.5,592.5 973.0,592.4 973.5,592.4 974.0,592.4 974.5,592.4 975.0,592.3 975.5,592.3 976.0,592.3 976.5,592.3 977.0,592.2 977.5,592.2 978.0,592.2 978.5,592.2 979.0,592.2 979.5,592.1 980.0,592.1 980.5,592.1 981.0,592.1 981.5,592.0 982.0,592.0 982.5,592.0 983.0,592.1 983.5,592.1 984.0,592.2 984.5,592.2 985.0,592.2 985.5,592.3 986.0,592.3 986.5,592.4 987.0,592.4 987.5,592.4 988.0,592.5 988.5,592.5 989.0,592.6 989.5,592.6 990.0,592.7 990.5,592.7 991.0,592.7 991.5,592.8 992.0,592.8 992.5,592.9 993.0,592.9 993.5,593.0 994.0,593.0 994.5,593.0 995.0,593.1 995.5,593.1 996.0,593.2 996.5,593.2 997.0,593.2 997.5,593.3 998.0,593.3 998.5,593.4 999.0,593.4 999.5,593.5 1000.0,593.5 1000.5,593.6 1001.0,593.7 1001.5,593.8 1002.0,593.8 1002.5,593.9 1003.0,594.0 1003.5,594.1 1004.0,594.2 1004.5,594.3 1005.0,594.3 1005.5,594.4 1006.0,594.5 1006.5,594.6 1007.0,594.7 1007.5,594.8 1008.0,594.8 1008.5,594.9 1009.0,594.9 1009.5,594.9 1010.0,595.0 1010.5,595.0 1011.0,595.1 1011.5,595.1 1012.0,595.2 1012.5,595.2 1013.0,595.2 1013.5,595.3 1014.0,595.3 1014.5,595.4 1015.0,595.4 1015.5,595.4 1016.0,595.5 1016.5,595.5 1017.0,595.6 1017.5,595.6 1018.0,595.7 1018.5,595.7 1019.0,595.7 1019.5,595.8 1020.0,595.8 1020.5,595.9 1021.0,595.9 1021.5,595.9 1022.0,596.0 1022.5,596.0 1023.0,596.1 1023.5,596.1 1024.0,596.2 1024.5,596.2 1025.0,596.2 1025.5,596.3 1026.0,596.3 1026.5,596.3 1027.0,596.3 1027.5,596.4 1028.0,596.4 1028.5,596.4 1029.0,596.5 1029.5,596.5 1030.0,596.5 1030.5,596.5 1031.0,596.6 1031.5,596.6 1032.0,596.6 1032.5,596.7 1033.0,596.7 1033.5,596.7 1034.0,596.7 1034.5,596.8 1035.0,596.8 1035.5,596.8 1036.0,596.9 1036.5,596.9 1037.0,596.9 1037.5,596.9 1038.0,597.0 1038.5,597.0 1039.0,597.0 1039.5,597.1 1040.0,597.1 1040.5,597.1 1041.0,597.1 1041.5,597.2 1042.0,597.2 1042.5,597.2 1043.0,597.3 1043.5,597.3 1044.0,597.3 1044.5,597.3 1045.0,597.4 1045.5,597.4 1046.0,597.4 1046.5,597.5 1047.0,597.5 1047.5,597.5 1048.0,597.5 1048.5,597.6 1049.0,597.6 1049.5,597.6 1050.0,597.7 1050.5,597.7 1051.0,597.7 1051.5,597.7 1052.0,597.8 1052.0,608.0 1051.5,608.0 1051.0,608.0 1050.5,608.0 1050.0,608.0 1049.5,608.0 1049.0,608.0 1048.5,608.0 1048.0,608.0 1047.5,608.0 1047.0,608.0 1046.5,608.0 1046.0,608.0 1045.5,608.0 1045.0,608.0 1044.5,608.0 1044.0,608.0 1043.5,608.0 1043.0,608.0 1042.5,608.0 1042.0,608.0 1041.5,608.0 1041.0,608.0 1040.5,608.0 1040.0,608.0 1039.5,608.0 1039.0,608.0 1038.5,608.0 1038.0,608.0 1037.5,608.0 1037.0,608.0 1036.5,608.0 1036.0,608.0 1035.5,608.0 1035.0,608.0 1034.5,608.0 1034.0,608.0 1033.5,608.0 1033.0,608.0 1032.5,608.0 1032.0,608.0 1031.5,608.0 1031.0,608.0 1030.5,608.0 1030.0,608.0 1029.5,608.0 1029.0,608.0 1028.5,608.0 1028.0,608.0 1027.5,608.0 1027.0,608.0 1026.5,608.0 1026.0,608.0 1025.5,608.0 1025.0,608.0 1024.5,608.0 1024.0,608.0 1023.5,608.0 1023.0,608.0 1022.5,608.0 1022.0,608.0 1021.5,608.0 1021.0,608.0 1020.5,608.0 1020.0,608.0 1019.5,608.0 1019.0,608.0 1018.5,608.0 1018.0,608.0 1017.5,608.0 1017.0,608.0 1016.5,608.0 1016.0,608.0 1015.5,608.0 1015.0,608.0 1014.5,608.0 1014.0,608.0 1013.5,608.0 1013.0,608.0 1012.5,608.0 1012.0,608.0 1011.5,608.0 1011.0,608.0 1010.5,608.0 1010.0,608.0 1009.5,608.0 1009.0,608.0 1008.5,608.0 1008.0,608.0 1007.5,608.0 1007.0,608.0 1006.5,608.0 1006.0,608.0 1005.5,608.0 1005.0,608.0 1004.5,608.0 1004.0,608.0 1003.5,608.0 1003.0,608.0 1002.5,608.0 1002.0,608.0 1001.5,608.0 1001.0,608.0 1000.5,608.0 1000.0,608.0 999.5,607.9 999.0,607.9 998.5,607.8 998.0,607.7 997.5,607.7 997.0,607.6 996.5,607.5 996.0,607.5 995.5,607.4 995.0,607.3 994.5,607.3 994.0,607.2 993.5,607.1 993.0,607.1 992.5,607.0 992.0,606.9 991.5,606.9 991.0,606.8 990.5,606.7 990.0,606.7 989.5,606.6 989.0,606.5 988.5,606.5 988.0,606.4 987.5,606.3 987.0,606.3 986.5,606.2 986.0,606.1 985.5,606.1 985.0,606.0 984.5,605.6 984.0,605.2 983.5,604.8 983.0,604.5 982.5,604.1 982.0,603.7 981.5,603.3 981.0,602.9 980.5,602.5 980.0,602.1 979.5,601.8 979.0,601.4 978.5,601.0 978.0,600.6 977.5,600.2 977.0,599.8 976.5,599.5 976.0,599.0 975.5,598.4 975.0,597.9 974.5,597.3 974.0,596.7 973.5,596.2 973.0,595.6 972.5,595.1 972.0,594.5 971.5,594.0 971.0,593.4 970.5,592.9" fill="#0000c8"/>
<line x1="116.5" y1="416" x2="116.5" y2="629" stroke="#d0d0d0" stroke-width="1" stroke-dasharray="1,1"/>
<line x1="237.5" y1="416" x2="237.5" y2="629" stroke="#d0d0d0" stroke-width="1" stroke-dasharray="1,1"/>
<line x1="363.5" y1="416" x2="363.5" y2="629" stroke="#d0d0d0" stroke-width="1" stroke-dasharray="1,1"/>
<line x1="509.5" y1="416" x2="509.5" y2="629" stroke="#d0d0d0" stroke-width="1" stroke-dasharray="1,1"/>
<line x1="641.5" y1="416" x2="641.5" y2="629" stroke="#d0d0d0" stroke-width="1" stroke-dasharray="1,1"/>
<line x1="780.5" y1="416" x2="780.5" y2="629" stroke="#d0d0d0" stroke-width="1" stroke-dasharray="1,1"/>
<line x1="888.5" y1="416" x2="888.5" y2="629" stroke="#d0d0d0" stroke-width="1" stroke-dasharray="1,1"/>
<line x1="1014.5" y1="416" x2="1014.5" y2="629" stroke="#d0d0d0" stroke-width="1" stroke-dasharray="1,1"/>
<rect x="121" y="570" width="5" height="32.60000000000002" fill="#ffff00"/>
<rect x="260" y="563.8" width="5" height="6.5" fill="#00ff00"/>
<rect x="412" y="540.2" width="5" height="30.0" fill="#00ff00"/>
<rect x="557" y="558.3" width="5" height="11.900000000000091" fill="#ffff00"/>
<rect x="728" y="454" width="5" height="116.20000000000005" fill="#00ff00"/>
<rect x="880" y="570" width="5" height="19.200000000000045" fill="#ffff00"/>
<rect x="974" y="569.7" width="5" height="18.59999999999991" fill="#00ff00"/>
<rect x="1050" y="569.7" width="5" height="29.799999999999955" fill="#ffff00"/>
<line x1="3.5" y1="570.5" x2="3.5" y2="493.0" stroke="#ff3c3c" stroke-width="1"/>
<line x1="9.5" y1="570.5" x2="9.5" y2="518.1" stroke="#ff3c3c" stroke-width="1"/>
<line x1="16.5" y1="570.5" x2="16.5" y2="543.1" stroke="#ff3c3c" stroke-width="1"/>
<line x1="22.5" y1="570.5" x2="22.5" y2="562.0" stroke="#ff3c3c" stroke-width="1"/>
<line x1="28.5" y1="570.5" x2="28.5" y2="577.0" stroke="#54fcfc" stroke-width="1"/>
<line x1="35.5" y1="570.5" x2="35.5" y2="587.6" stroke="#54fcfc" stroke-width="1"/>
<line x1="41.5" y1="570.5" x2="41.5" y2="594.4" stroke="#54fcfc" stroke-width="1"/>
<line x1="47.5" y1="570.5" x2="47.5" y2="603.2" stroke="#54fcfc" stroke-width="1"/>
<line x1="54.5" y1="570.5" x2="54.5" y2="611.9" stroke="#54fcfc" stroke-width="1"/>
<line x1="60.5" y1="570.5" x2="60.5" y2="619.9" stroke="#54fcfc" stroke-width="1"/>
<line x1="66.5" y1="570.5" x2="66.5" y2="623.3" stroke="#54fcfc" stroke-width="1"/>
<line x1="73.5" y1="570.5" x2="73.5" y2="625.4" stroke="#54fcfc" stroke-width="1"/>
<line x1="79.5" y1="570.5" x2="79.5" y2="624.3" stroke="#54fcfc" stroke-width="1"/>
<line x1="85.5" y1="570.5" x2="85.5" y2="622.3" stroke="#54fcfc" stroke-width="1"/>
<line x1="92.5" y1="570.5" x2="92.5" y2="619.4" stroke="#54fcfc" stroke-width="1"/>
<line x1="98.5" y1="570.5" x2="98.5" y2="616.3" stroke="#54fcfc" stroke-width="1"/>
<line x1="104.5" y1="570.5" x2="104.5" y2="612.6" stroke="#54fcfc" stroke-width="1"/>
<line x1="111.5" y1="570.5" x2="111.5" y2="608.3" stroke="#54fcfc" stroke-width="1"/>
<line x1="117.5" y1="570.5" x2="117.5" y2="604.0" stroke="#54fcfc" stroke-width="1"/>
<line x1="123.5" y1="570.5" x2="123.5" y2="597.1" stroke="#54fcfc" stroke-width="1"/>
<line x1="130.5" y1="570.5" x2="130.5" y2="589.6" stroke="#54fcfc" stroke-width="1"/>
<line x1="136.5" y1="570.5" x2="136.5" y2="581.7" stroke="#54fcfc" stroke-width="1"/>
<line x1="142.5" y1="570.5" x2="142.5" y2="571.6" stroke="#54fcfc" stroke-width="1"/>
<line x1="149.5" y1="570.5" x2="149.5" y2="564.3" stroke="#ff3c3c" stroke-width="1"/>
<line x1="155.5" y1="570.5" x2="155.5" y2="562.5" stroke="#ff3c3c" stroke-width="1"/>
<line x1="161.5" y1="570.5" x2="161.5" y2="562.2" stroke="#ff3c3c" stroke-width="1"/>
<line x1="167.5" y1="570.5" x2="167.5" y2="559.0" stroke="#ff3c3c" stroke-width="1"/>
<line x1="174.5" y1="570.5" x2="174.5" y2="559.0" stroke="#ff3c3c" stroke-width="1"/>
<line x1="180.5" y1="570.5" x2="180.5" y2="559.0" stroke="#ff3c3c" stroke-width="1"/>
<line x1="186.5" y1="570.5" x2="186.5" y2="559.0" stroke="#ff3c3c" stroke-width="1"/>
<line x1="193.5" y1="570.5" x2="193.5" y2="559.0" stroke="#ff3c3c" stroke-width="1"/>
<line x1="199.5" y1="570.5" x2="199.5" y2="559.0" stroke="#ff3c3c" stroke-width="1"/>
<line x1="205.5" y1="570.5" x2="205.5" y2="555.9" stroke="#ff3c3c" stroke-width="1"/>
<line x1="212.5" y1="570.5" x2="212.5" y2="559.5" stroke="#ff3c3c" stroke-width="1"/>
<line x1="218.5" y1="570.5" x2="218.5" y2="562.2" stroke="#ff3c3c" stroke-width="1"/>
<line x1="224.5" y1="570.5" x2="224.5" y2="564.4" stroke="#ff3c3c" stroke-width="1"/>
<line x1="231.5" y1="570.5" x2="231.5" y2="567.2" stroke="#ff3c3c" stroke-width="1"/>
<line x1="237.5" y1="570.5" x2="237.5" y2="568.2" stroke="#ff3c3c" stroke-width="1"/>
<line x1="243.5" y1="570.5" x2="243.5" y2="569.0" stroke="#ff3c3c" stroke-width="1"/>
<line x1="250.5" y1="570.5" x2="250.5" y2="569.8" stroke="#ff3c3c" stroke-width="1"/>
<line x1="256.5" y1="570.5" x2="256.5" y2="571.1" stroke="#54fcfc" stroke-width="1"/>
<line x1="262.5" y1="570.5" x2="262.5" y2="572.8" stroke="#54fcfc" stroke-width="1"/>
<line x1="269.5" y1="570.5" x2="269.5" y2="574.8" stroke="#54fcfc" stroke-width="1"/>
<line x1="275.5" y1="570.5" x2="275.5" y2="575.8" stroke="#54fcfc" stroke-width="1"/>
<line x1="281.5" y1="570.5" x2="281.5" y2="575.5" stroke="#54fcfc" stroke-width="1"/>
<line x1="288.5" y1="570.5" x2="288.5" y2="574.6" stroke="#54fcfc" stroke-width="1"/>
<line x1="294.5" y1="570.5" x2="294.5" y2="573.1" stroke="#54fcfc" stroke-width="1"/>
<line x1="300.5" y1="570.5" x2="300.5" y2="570.8" stroke="#54fcfc" stroke-width="1"/>
<line x1="307.5" y1="570.5" x2="307.5" y2="565.9" stroke="#ff3c3c" stroke-width="1"/>
<line x1="313.5" y1="570.5" x2="313.5" y2="561.9" stroke="#ff3c3c" stroke-width="1"/>
<line x1="319.5" y1="570.5" x2="319.5" y2="558.0" stroke="#ff3c3c" stroke-width="1"/>
<line x1="325.5" y1="570.5" x2="325.5" y2="554.0" stroke="#ff3c3c" stroke-width="1"/>
<line x1="332.5" y1="570.5" x2="332.5" y2="550.5" stroke="#ff3c3c" stroke-width="1"/>
<line x1="338.5" y1="570.5" x2="338.5" y2="547.7" stroke="#ff3c3c" stroke-width="1"/>
<line x1="344.5" y1="570.5" x2="344.5" y2="541.3" stroke="#ff3c3c" stroke-width="1"/>
<line x1="351.5" y1="570.5" x2="351.5" y2="534.9" stroke="#ff3c3c" stroke-width="1"/>
<line x1="357.5" y1="570.5" x2="357.5" y2="526.9" stroke="#ff3c3c" stroke-width="1"/>
<line x1="363.5" y1="570.5" x2="363.5" y2="520.5" stroke="#ff3c3c" stroke-width="1"/>
<line x1="370.5" y1="570.5" x2="370.5" y2="522.4" stroke="#ff3c3c" stroke-width="1"/>
<line x1="376.5" y1="570.5" x2="376.5" y2="524.1" stroke="#ff3c3c" stroke-width="1"/>
<line x1="382.5" y1="570.5" x2="382.5" y2="524.6" stroke="#ff3c3c" stroke-width="1"/>
<line x1="389.5" y1="570.5" x2="389.5" y2="525.3" stroke="#ff3c3c" stroke-width="1"/>
<line x1="395.5" y1="570.5" x2="395.5" y2="528.6" stroke="#ff3c3c" stroke-width="1"/>
<line x1="401.5" y1="570.5" x2="401.5" y2="537.7" stroke="#ff3c3c" stroke-width="1"/>
<line x1="408.5" y1="570.5" x2="408.5" y2="545.8" stroke="#ff3c3c" stroke-width="1"/>
<line x1="414.5" y1="570.5" x2="414.5" y2="551.8" stroke="#ff3c3c" stroke-width="1"/>
<line x1="420.5" y1="570.5" x2="420.5" y2="556.4" stroke="#ff3c3c" stroke-width="1"/>
<line x1="427.5" y1="570.5" x2="427.5" y2="553.9" stroke="#ff3c3c" stroke-width="1"/>
<line x1="433.5" y1="570.5" x2="433.5" y2="551.8" stroke="#ff3c3c" stroke-width="1"/>
<line x1="439.5" y1="570.5" x2="439.5" y2="550.1" stroke="#ff3c3c" stroke-width="1"/>
<line x1="446.5" y1="570.5" x2="446.5" y2="551.5" stroke="#ff3c3c" stroke-width="1"/>
<line x1="452.5" y1="570.5" x2="452.5" y2="553.4" stroke="#ff3c3c" stroke-width="1"/>
<line x1="458.5" y1="570.5" x2="458.5" y2="555.8" stroke="#ff3c3c" stroke-width="1"/>
<line x1="465.5" y1="570.5" x2="465.5" y2="558.2" stroke="#ff3c3c" stroke-width="1"/>
<line x1="471.5" y1="570.5" x2="471.5" y2="560.6" stroke="#ff3c3c" stroke-width="1"/>
<line x1="477.5" y1="570.5" x2="477.5" y2="562.7" stroke="#ff3c3c" stroke-width="1"/>
<line x1="483.5" y1="570.5" x2="483.5" y2="564.2" stroke="#ff3c3c" stroke-width="1"/>
<line x1="490.5" y1="570.5" x2="490.5" y2="565.6" stroke="#ff3c3c" stroke-width="1"/>
<line x1="496.5" y1="570.5" x2="496.5" y2="566.2" stroke="#ff3c3c" stroke-width="1"/>
<line x1="502.5" y1="570.5" x2="502.5" y2="567.7" stroke="#ff3c3c" stroke-width="1"/>
<line x1="509.5" y1="570.5" x2="509.5" y2="570.4" stroke="#ff3c3c" stroke-width="1"/>
<line x1="515.5" y1="570.5" x2="515.5" y2="571.7" stroke="#54fcfc" stroke-width="1"/>
<line x1="521.5" y1="570.5" x2="521.5" y2="572.1" stroke="#54fcfc" stroke-width="1"/>
<line x1="528.5" y1="570.5" x2="528.5" y2="572.6" stroke="#54fcfc" stroke-width="1"/>
<line x1="534.5" y1="570.5" x2="534.5" y2="573.9" stroke="#54fcfc" stroke-width="1"/>
<line x1="540.5" y1="570.5" x2="540.5" y2="574.0" stroke="#54fcfc" stroke-width="1"/>
<line x1="547.5" y1="570.5" x2="547.5" y2="574.0" stroke="#54fcfc" stroke-width="1"/>
<line x1="553.5" y1="570.5" x2="553.5" y2="565.5" stroke="#ff3c3c" stroke-width="1"/>
<line x1="559.5" y1="570.5" x2="559.5" y2="555.7" stroke="#ff3c3c" stroke-width="1"/>
<line x1="566.5" y1="570.5" x2="566.5" y2="544.2" stroke="#ff3c3c" stroke-width="1"/>
<line x1="572.5" y1="570.5" x2="572.5" y2="532.6" stroke="#ff3c3c" stroke-width="1"/>
<line x1="578.5" y1="570.5" x2="578.5" y2="519.1" stroke="#ff3c3c" stroke-width="1"/>
<line x1="585.5" y1="570.5" x2="585.5" y2="499.2" stroke="#ff3c3c" stroke-width="1"/>
<line x1="591.5" y1="570.5" x2="591.5" y2="482.7" stroke="#ff3c3c" stroke-width="1"/>
<line x1="597.5" y1="570.5" x2="597.5" y2="466.2" stroke="#ff3c3c" stroke-width="1"/>
<line x1="604.5" y1="570.5" x2="604.5" y2="453.3" stroke="#ff3c3c" stroke-width="1"/>
<line x1="610.5" y1="570.5" x2="610.5" y2="451.2" stroke="#ff3c3c" stroke-width="1"/>
<line x1="616.5" y1="570.5" x2="616.5" y2="446.2" stroke="#ff3c3c" stroke-width="1"/>
<line x1="623.5" y1="570.5" x2="623.5" y2="446.2" stroke="#ff3c3c" stroke-width="1"/>
<line x1="629.5" y1="570.5" x2="629.5" y2="446.2" stroke="#ff3c3c" stroke-width="1"/>
<line x1="635.5" y1="570.5" x2="635.5" y2="442.2" stroke="#ff3c3c" stroke-width="1"/>
<line x1="641.5" y1="570.5" x2="641.5" y2="437.7" stroke="#ff3c3c" stroke-width="1"/>
<line x1="648.5" y1="570.5" x2="648.5" y2="438.3" stroke="#ff3c3c" stroke-width="1"/>
<line x1="654.5" y1="570.5" x2="654.5" y2="443.2" stroke="#ff3c3c" stroke-width="1"/>
<line x1="660.5" y1="570.5" x2="660.5" y2="453.9" stroke="#ff3c3c" stroke-width="1"/>
<line x1="667.5" y1="570.5" x2="667.5" y2="454.9" stroke="#ff3c3c" stroke-width="1"/>
<line x1="673.5" y1="570.5" x2="673.5" y2="456.6" stroke="#ff3c3c" stroke-width="1"/>
<line x1="679.5" y1="570.5" x2="679.5" y2="462.1" stroke="#ff3c3c" stroke-width="1"/>
<line x1="686.5" y1="570.5" x2="686.5" y2="462.0" stroke="#ff3c3c" stroke-width="1"/>
<line x1="692.5" y1="570.5" x2="692.5" y2="460.7" stroke="#ff3c3c" stroke-width="1"/>
<line x1="698.5" y1="570.5" x2="698.5" y2="460.7" stroke="#ff3c3c" stroke-width="1"/>
<line x1="705.5" y1="570.5" x2="705.5" y2="460.5" stroke="#ff3c3c" stroke-width="1"/>
<line x1="711.5" y1="570.5" x2="711.5" y2="459.3" stroke="#ff3c3c" stroke-width="1"/>
<line x1="717.5" y1="570.5" x2="717.5" y2="458.6" stroke="#ff3c3c" stroke-width="1"/>
<line x1="724.5" y1="570.5" x2="724.5" y2="458.0" stroke="#ff3c3c" stroke-width="1"/>
<line x1="730.5" y1="570.5" x2="730.5" y2="463.0" stroke="#ff3c3c" stroke-width="1"/>
<line x1="736.5" y1="570.5" x2="736.5" y2="472.5" stroke="#ff3c3c" stroke-width="1"/>
<line x1="743.5" y1="570.5" x2="743.5" y2="481.2" stroke="#ff3c3c" stroke-width="1"/>
<line x1="749.5" y1="570.5" x2="749.5" y2="488.7" stroke="#ff3c3c" stroke-width="1"/>
<line x1="755.5" y1="570.5" x2="755.5" y2="500.0" stroke="#ff3c3c" stroke-width="1"/>
<line x1="762.5" y1="570.5" x2="762.5" y2="512.2" stroke="#ff3c3c" stroke-width="1"/>
<line x1="768.5" y1="570.5" x2="768.5" y2="522.9" stroke="#ff3c3c" stroke-width="1"/>
<line x1="774.5" y1="570.5" x2="774.5" y2="533.7" stroke="#ff3c3c" stroke-width="1"/>
<line x1="781.5" y1="570.5" x2="781.5" y2="546.4" stroke="#ff3c3c" stroke-width="1"/>
<line x1="787.5" y1="570.5" x2="787.5" y2="559.0" stroke="#ff3c3c" stroke-width="1"/>
<line x1="793.5" y1="570.5" x2="793.5" y2="570.2" stroke="#ff3c3c" stroke-width="1"/>
<line x1="799.5" y1="570.5" x2="799.5" y2="579.4" stroke="#54fcfc" stroke-width="1"/>
<line x1="806.5" y1="570.5" x2="806.5" y2="585.7" stroke="#54fcfc" stroke-width="1"/>
<line x1="812.5" y1="570.5" x2="812.5" y2="592.4" stroke="#54fcfc" stroke-width="1"/>
<line x1="818.5" y1="570.5" x2="818.5" y2="599.4" stroke="#54fcfc" stroke-width="1"/>
<line x1="825.5" y1="570.5" x2="825.5" y2="604.6" stroke="#54fcfc" stroke-width="1"/>
<line x1="831.5" y1="570.5" x2="831.5" y2="608.5" stroke="#54fcfc" stroke-width="1"/>
<line x1="837.5" y1="570.5" x2="837.5" y2="610.5" stroke="#54fcfc" stroke-width="1"/>
<line x1="844.5" y1="570.5" x2="844.5" y2="611.8" stroke="#54fcfc" stroke-width="1"/>
<line x1="850.5" y1="570.5" x2="850.5" y2="609.7" stroke="#54fcfc" stroke-width="1"/>
<line x1="856.5" y1="570.5" x2="856.5" y2="603.2" stroke="#54fcfc" stroke-width="1"/>
<line x1="863.5" y1="570.5" x2="863.5" y2="594.5" stroke="#54fcfc" stroke-width="1"/>
<line x1="869.5" y1="570.5" x2="869.5" y2="586.2" stroke="#54fcfc" stroke-width="1"/>
<line x1="875.5" y1="570.5" x2="875.5" y2="586.1" stroke="#54fcfc" stroke-width="1"/>
<line x1="882.5" y1="570.5" x2="882.5" y2="587.0" stroke="#54fcfc" stroke-width="1"/>
<line x1="888.5" y1="570.5" x2="888.5" y2="589.0" stroke="#54fcfc" stroke-width="1"/>
<line x1="894.5" y1="570.5" x2="894.5" y2="590.9" stroke="#54fcfc" stroke-width="1"/>
<line x1="901.5" y1="570.5" x2="901.5" y2="592.1" stroke="#54fcfc" stroke-width="1"/>
<line x1="907.5" y1="570.5" x2="907.5" y2="592.7" stroke="#54fcfc" stroke-width="1"/>
<line x1="913.5" y1="570.5" x2="913.5" y2="592.7" stroke="#54fcfc" stroke-width="1"/>
<line x1="920.5" y1="570.5" x2="920.5" y2="588.5" stroke="#54fcfc" stroke-width="1"/>
<line x1="926.5" y1="570.5" x2="926.5" y2="584.1" stroke="#54fcfc" stroke-width="1"/>
<line x1="932.5" y1="570.5" x2="932.5" y2="580.5" stroke="#54fcfc" stroke-width="1"/>
<line x1="939.5" y1="570.5" x2="939.5" y2="579.1" stroke="#54fcfc" stroke-width="1"/>
<line x1="945.5" y1="570.5" x2="945.5" y2="578.6" stroke="#54fcfc" stroke-width="1"/>
<line x1="951.5" y1="570.5" x2="951.5" y2="578.7" stroke="#54fcfc" stroke-width="1"/>
<line x1="957.5" y1="570.5" x2="957.5" y2="581.0" stroke="#54fcfc" stroke-width="1"/>
<line x1="964.5" y1="570.5" x2="964.5" y2="587.0" stroke="#54fcfc" stroke-width="1"/>
<line x1="970.5" y1="570.5" x2="970.5" y2="593.0" stroke="#54fcfc" stroke-width="1"/>
<line x1="976.5" y1="570.5" x2="976.5" y2="599.8" stroke="#54fcfc" stroke-width="1"/>
<line x1="983.5" y1="570.5" x2="983.5" y2="604.7" stroke="#54fcfc" stroke-width="1"/>
<line x1="989.5" y1="570.5" x2="989.5" y2="606.6" stroke="#54fcfc" stroke-width="1"/>
<line x1="995.5" y1="570.5" x2="995.5" y2="607.5" stroke="#54fcfc" stroke-width="1"/>
<line x1="1002.5" y1="570.5" x2="1002.5" y2="608.0" stroke="#54fcfc" stroke-width="1"/>
<line x1="1008.5" y1="570.5" x2="1008.5" y2="608.0" stroke="#54fcfc" stroke-width="1"/>
<line x1="1014.5" y1="570.5" x2="1014.5" y2="608.0" stroke="#54fcfc" stroke-width="1"/>
<line x1="1021.5" y1="570.5" x2="1021.5" y2="608.0" stroke="#54fcfc" stroke-width="1"/>
<line x1="1027.5" y1="570.5" x2="1027.5" y2="608.0" stroke="#54fcfc" stroke-width="1"/>
<line x1="1033.5" y1="570.5" x2="1033.5" y2="608.0" stroke="#54fcfc" stroke-width="1"/>
<line x1="1040.5" y1="570.5" x2="1040.5" y2="608.0" stroke="#54fcfc" stroke-width="1"/>
<line x1="1046.5" y1="570.5" x2="1046.5" y2="608.0" stroke="#54fcfc" stroke-width="1"/>
<line x1="1052.5" y1="570.5" x2="1052.5" y2="608.0" stroke="#54fcfc" stroke-width="1"/>
<path d="M3.0,446.7 C4.1,447.1 7.0,448.0 9.7,449.4 C12.4,450.8 16.2,453.0 19.4,454.8 C22.6,456.6 25.6,457.9 29.0,460.2 C32.4,462.4 36.2,464.8 40.0,468.3 C43.8,471.8 47.6,476.8 51.7,481.4 C55.8,486.0 60.3,491.1 64.6,496.0 C68.9,500.9 73.3,505.4 77.6,510.5 C81.9,515.6 86.2,521.2 90.5,526.6 C94.8,532.0 99.1,537.9 103.4,542.8 C107.7,547.6 112.0,551.7 116.3,555.7 C120.6,559.7 125.4,563.5 129.3,567.0 C133.2,570.5 136.7,573.9 140.0,576.5 C143.3,579.1 146.1,580.7 149.2,582.5 C152.3,584.3 155.1,585.5 158.5,587.1 C161.9,588.7 166.0,591.2 169.5,592.2 C173.0,593.2 176.0,592.7 179.7,592.8 C183.4,592.9 187.5,593.0 191.7,592.6 C195.8,592.2 200.1,591.5 204.6,590.3 C209.1,589.1 213.9,586.7 218.5,585.2 C223.1,583.7 228.7,582.1 232.3,581.1 C235.9,580.1 235.2,580.6 240.0,579.2 C244.8,577.8 253.6,574.6 260.9,572.8 C268.2,571.0 277.6,569.1 284.0,568.3 C290.4,567.5 294.1,568.2 299.3,568.0 C304.5,567.8 310.3,567.5 315.4,567.0 C320.5,566.5 325.8,565.3 330.0,564.8 C334.2,564.2 337.1,564.4 340.6,563.7 C344.1,563.0 347.3,561.5 351.2,560.5 C355.1,559.5 359.8,558.7 364.0,557.8 C368.2,556.9 372.4,556.0 376.7,555.2 C380.9,554.4 385.2,553.7 389.5,553.1 C393.8,552.5 397.9,552.0 402.2,551.6 C406.4,551.2 410.8,551.2 415.0,550.6 C419.2,550.0 423.4,548.6 427.7,547.8 C431.9,547.0 436.2,546.2 440.5,545.7 C444.8,545.2 448.9,545.0 453.2,544.6 C457.4,544.2 461.8,543.7 466.0,543.5 C470.2,543.3 474.5,543.2 478.7,543.5 C482.9,543.8 487.8,544.6 491.4,545.0 C494.9,545.4 497.0,545.4 500.0,545.7 C503.0,546.1 506.1,546.4 509.2,547.1 C512.3,547.8 515.4,549.0 518.5,549.9 C521.6,550.8 524.6,551.4 527.7,552.2 C530.8,553.0 533.8,553.9 536.9,554.9 C540.0,555.9 543.1,557.3 546.2,558.2 C549.3,559.1 552.3,560.1 555.4,560.5 C558.5,560.9 561.5,560.8 564.6,560.8 C567.7,560.8 571.6,560.7 573.9,560.5 C576.2,560.3 577.0,560.0 578.5,559.5 C580.0,559.0 580.8,558.6 583.1,557.7 C585.4,556.8 589.5,555.2 592.3,554.0 C595.1,552.8 597.5,551.9 600.0,550.3 C602.5,548.7 603.2,547.3 607.0,544.4 C610.8,541.5 617.7,536.2 623.0,533.0 C628.3,529.8 633.2,528.1 638.6,525.0 C644.0,521.9 650.3,517.4 655.6,514.2 C660.9,511.0 665.1,508.9 670.4,505.7 C675.7,502.5 681.7,499.1 687.4,495.1 C693.1,491.1 698.7,486.1 704.4,481.5 C710.1,476.9 717.1,470.6 721.4,467.5 C725.7,464.4 726.8,464.6 730.0,463.2 C733.2,461.8 737.0,459.8 740.5,459.0 C744.0,458.2 748.0,458.4 751.2,458.6 C754.5,458.9 756.1,459.0 760.0,460.5 C763.9,462.0 769.7,464.9 774.6,467.8 C779.5,470.7 784.3,474.1 789.2,478.0 C794.1,481.9 798.9,486.6 803.8,491.2 C808.7,495.8 813.6,501.2 818.5,505.8 C823.4,510.4 828.2,514.3 833.1,518.9 C838.0,523.5 842.8,529.1 847.7,533.5 C852.6,537.9 857.4,541.5 862.3,545.2 C867.2,548.9 873.2,553.0 876.9,555.5 C880.5,558.0 881.7,558.2 884.2,560.0 C886.7,561.8 889.3,564.3 892.1,566.2 C894.9,568.1 898.0,569.6 901.0,571.5 C904.0,573.4 906.8,575.9 909.8,577.7 C912.8,579.5 915.9,580.9 918.7,582.1 C921.5,583.3 923.7,583.8 926.6,584.8 C929.5,585.8 933.3,587.3 936.4,588.3 C939.5,589.2 942.3,589.9 945.2,590.5 C948.1,591.1 950.3,591.5 954.0,591.9 C957.7,592.3 962.6,592.7 967.3,592.7 C972.0,592.7 976.8,591.9 982.2,592.0 C987.7,592.1 995.8,593.0 1000.0,593.5 C1004.2,594.0 1003.6,594.3 1007.7,594.8 C1011.8,595.2 1017.1,595.7 1024.6,596.2 C1032.0,596.7 1047.8,597.5 1052.4,597.8" fill="none" stroke="#ffff00" stroke-width="2"/>
<path d="M3.0,443.0 C4.1,444.1 6.9,446.8 9.7,449.4 C12.5,452.0 16.9,455.3 20.0,458.5 C23.1,461.7 25.7,464.7 28.5,468.6 C31.3,472.5 34.1,477.6 36.9,482.1 C39.7,486.6 42.6,491.2 45.4,495.7 C48.2,500.2 51.0,504.7 53.8,509.2 C56.6,513.7 59.5,518.2 62.3,522.7 C65.1,527.2 67.9,531.7 70.7,536.2 C73.5,540.7 76.4,545.6 79.2,549.8 C82.0,554.0 85.0,557.8 87.7,561.5 C90.4,565.2 92.9,568.7 95.4,572.3 C98.0,575.9 100.4,579.7 103.0,583.0 C105.6,586.3 108.2,589.5 110.8,592.3 C113.4,595.1 115.9,598.0 118.5,600.0 C121.1,602.0 123.7,603.4 126.2,604.6 C128.8,605.8 131.2,606.7 133.8,607.0 C136.4,607.3 138.8,606.7 141.5,606.2 C144.2,605.7 146.1,604.8 150.0,603.8 C153.9,602.8 160.4,601.6 164.9,600.0 C169.4,598.4 173.4,595.9 176.9,594.0 C180.4,592.1 183.1,590.3 186.2,588.5 C189.3,586.7 192.3,585.2 195.4,583.4 C198.5,581.6 201.5,579.5 204.6,577.9 C207.7,576.3 210.8,575.0 213.9,573.7 C217.0,572.4 220.5,571.2 223.1,570.0 C225.7,568.8 226.8,567.2 229.6,566.3 C232.4,565.4 236.8,565.0 240.0,564.5 C243.2,564.0 245.0,563.4 248.5,563.1 C252.0,562.8 255.6,562.1 260.9,562.7 C266.1,563.4 273.6,566.0 280.0,567.0 C286.4,568.0 293.4,568.3 299.3,568.7 C305.2,569.1 310.3,569.4 315.4,569.3 C320.5,569.2 325.8,568.3 330.0,568.0 C334.2,567.7 337.1,568.2 340.6,567.5 C344.1,566.8 347.3,565.2 351.2,563.7 C355.1,562.2 359.8,560.2 364.0,558.4 C368.2,556.6 372.4,554.9 376.7,553.1 C380.9,551.3 385.2,549.4 389.5,547.8 C393.8,546.2 397.9,544.7 402.2,543.5 C406.4,542.3 410.8,541.2 415.0,540.4 C419.2,539.6 423.4,539.3 427.7,538.9 C431.9,538.5 436.2,538.2 440.5,538.2 C444.8,538.2 448.9,538.2 453.2,538.7 C457.4,539.2 461.8,540.1 466.0,541.4 C470.2,542.7 474.5,544.9 478.7,546.7 C482.9,548.5 487.8,550.9 491.4,552.0 C494.9,553.1 497.0,552.7 500.0,553.5 C503.0,554.3 506.1,555.8 509.2,556.8 C512.3,557.8 515.4,558.6 518.5,559.5 C521.6,560.4 524.6,561.3 527.7,561.9 C530.8,562.5 533.8,562.7 536.9,563.2 C540.0,563.7 543.1,564.6 546.2,564.9 C549.3,565.2 552.3,565.2 555.4,565.2 C558.5,565.2 561.5,565.2 564.6,565.2 C567.7,565.2 571.6,565.4 573.9,564.9 C576.2,564.4 577.0,563.2 578.5,562.3 C580.0,561.4 580.8,560.7 583.1,559.5 C585.4,558.3 589.5,556.7 592.3,554.9 C595.1,553.1 597.5,551.0 600.0,548.5 C602.5,546.0 603.4,543.5 607.0,539.6 C610.6,535.7 616.0,531.0 621.6,525.0 C627.2,519.0 635.0,509.7 640.7,503.6 C646.4,497.6 650.7,493.3 655.6,488.7 C660.5,484.1 665.8,480.1 670.4,476.0 C675.0,471.9 678.6,467.7 683.2,464.3 C687.8,460.9 693.0,457.8 698.0,455.8 C703.0,453.8 707.9,452.6 712.9,452.2 C717.9,451.8 722.5,452.6 727.8,453.7 C733.1,454.8 739.4,456.9 744.8,459.0 C750.2,461.1 755.0,463.6 760.0,466.3 C765.0,469.0 769.7,471.5 774.6,475.1 C779.5,478.8 784.3,483.1 789.2,488.2 C794.1,493.3 798.9,499.7 803.8,505.8 C808.7,511.9 813.6,518.7 818.5,524.8 C823.4,530.9 828.2,536.4 833.1,542.3 C838.0,548.1 842.8,554.8 847.7,559.9 C852.6,565.0 858.6,569.5 862.3,573.0 C866.0,576.5 867.2,578.8 870.0,580.8 C872.8,582.8 875.8,583.7 878.8,585.2 C881.8,586.8 884.0,588.4 887.7,590.1 C891.4,591.8 896.6,594.4 901.0,595.4 C905.4,596.4 909.0,596.2 914.2,596.3 C919.4,596.4 926.8,596.5 932.0,595.8 C937.2,595.1 940.8,593.3 945.2,591.9 C949.6,590.5 954.4,588.3 958.5,587.4 C962.6,586.5 967.0,586.7 970.0,586.5 C973.0,586.3 974.0,585.9 976.3,586.2 C978.6,586.5 981.0,587.2 984.0,588.3 C987.0,589.4 990.2,591.7 994.2,593.0 C998.2,594.3 1002.6,595.3 1007.7,596.2 C1012.8,597.1 1017.1,597.7 1024.6,598.2 C1032.0,598.7 1047.8,599.2 1052.4,599.4" fill="none" stroke="#ffffff" stroke-width="2"/>
<polyline points="3.0,490.4 9.7,517.0 16.2,542.8 25.9,571.9 35.5,588.0 40.0,592.2 52.4,609.5 59.8,619.5 71.0,625.6 77.2,625.0 87.0,621.9 102.0,614.5 109.4,609.5 119.3,602.7 126.7,593.4 135.4,583.5 140.0,575.0 148.3,564.5 153.9,562.6 162.2,562.2 167.7,559.0 200.0,559.0 205.6,555.7 212.0,559.4 218.5,562.2 225.0,564.5 228.6,566.8 240.0,568.6 247.6,569.3 260.5,571.9 267.0,574.5 276.7,576.0 286.4,575.0 299.3,571.9 307.3,565.7 330.0,551.5 338.5,547.8 351.2,535.0 362.9,520.2 375.6,524.0 388.5,525.0 396.6,529.2 403.0,539.6 411.0,549.3 420.8,556.4 430.5,552.5 440.2,550.0 450.0,552.5 462.8,557.4 475.7,562.2 488.7,565.4 500.0,566.5 512.0,571.5 527.7,572.5 534.2,573.9 547.1,574.1 557.2,560.5 573.9,530.0 577.0,525.0 583.4,503.6 602.5,453.7 609.9,451.6 616.3,446.2 630.1,446.2 641.8,437.7 648.1,438.2 654.5,443.0 659.8,453.7 672.6,455.8 681.1,463.2 691.7,460.7 704.4,460.7 713.0,459.0 725.7,457.9 729.9,462.2 740.5,478.1 751.2,490.8 760.0,508.7 774.6,533.5 789.2,562.8 798.0,577.4 809.7,589.1 821.4,602.2 833.1,609.5 847.7,612.5 856.5,603.7 868.2,587.6 870.0,585.7 880.6,586.5 887.7,588.8 896.5,591.4 905.4,592.7 914.2,592.7 926.6,583.9 933.7,579.9 942.6,578.6 951.4,578.6 958.5,581.2 963.8,586.5 970.0,592.3 976.3,599.3 985.0,606.0 1000.0,608.0 1052.4,608.0" fill="none" stroke="#ff1a8c" stroke-width="2" stroke-linejoin="round"/>
<polyline points="0,602.5 57,602.5 61.5,603.5 65.3,604.5 69.6,606.5 72.3,608.5 74,609.5 1075,609.5" fill="none" stroke="#00ff00" stroke-width="1"/>
<polyline points="0,618.5 57.2,618.5 59,619.5" fill="none" stroke="#00ff00" stroke-width="1"/>
<line x1="64" y1="626.5" x2="1075" y2="626.5" stroke="#00ff00" stroke-width="1"/>
<g stroke="#00ff00" stroke-width="1" fill="none"><line x1="269.5" y1="560" x2="266" y2="566"/><polyline points="266,563 266,566 269,566"/></g>
<g stroke="#54fcfc" stroke-width="1" fill="none"><line x1="266.5" y1="565.7" x2="262.6" y2="573.6"/><polyline points="262.6,570.6 262.6,573.6 265.6,573.6"/></g>
<g stroke="#00ff00" stroke-width="1" fill="none"><line x1="422.4" y1="537" x2="418" y2="545.7"/><polyline points="418,542.7 418,545.7 421,545.7"/></g>
<g stroke="#00ff00" stroke-width="1" fill="none"><line x1="738.4" y1="450.5" x2="734" y2="459"/><polyline points="734,456 734,459 737,459"/></g>
<g stroke="#54fcfc" stroke-width="1" fill="none"><line x1="983.4" y1="566.6" x2="977.8" y2="573.5"/><polyline points="977.8,570.5 977.8,573.5 980.8,573.5"/></g>
<g stroke="#00ff00" stroke-width="1" fill="none"><line x1="983.4" y1="582" x2="978.4" y2="589.6"/><polyline points="978.4,586.6 978.4,589.6 981.4,589.6"/></g>
<text x="68" y="627" fill="#54fcfc" font-size="13">+试盘</text>
<text x="131" y="608" fill="#ffff00" font-size="13">-多</text>
<text x="269" y="567" fill="#00ff00" font-size="13">逃顶</text>
<text x="267" y="576" fill="#54fcfc" font-size="13">空中空</text>
<text x="318" y="574" fill="#ffff00" font-size="13">多</text>
<text x="422" y="545" fill="#00ff00" font-size="13">逃顶</text>
<text x="571" y="572" fill="#ffff00" font-size="11">多</text>
<text x="738" y="457" fill="#00ff00" font-size="13">逃顶</text>
<text x="826" y="612" fill="#54fcfc" font-size="13">+试盘</text>
<text x="894" y="592" fill="#ffff00" font-size="13">多</text>
<text x="984.5" y="575" fill="#54fcfc" font-size="12.5">空中空</text>
<text x="984.5" y="591" fill="#00ff00" font-size="12.5">逃顶</text>
<rect x="1068" y="598.5" width="4" height="1.5" fill="#ffff00"/>
<line x1="0" y1="19.5" x2="1130" y2="19.5" stroke="#c00000" stroke-width="1.2"/>
<line x1="0" y1="396.5" x2="1075" y2="396.5" stroke="#c00000" stroke-width="1.2"/>
<line x1="1075" y1="396.5" x2="1130" y2="396.5" stroke="#c00000" stroke-width="2"/>
<line x1="1075.5" y1="19" x2="1075.5" y2="396" stroke="#c00000" stroke-width="1"/>
<line x1="1076" y1="396" x2="1076" y2="630" stroke="#c00000" stroke-width="2"/>
<line x1="1126.5" y1="19" x2="1126.5" y2="650" stroke="#c00000" stroke-width="1.5"/>
<line x1="0.5" y1="0" x2="0.5" y2="19" stroke="#c00000" stroke-width="1"/>
<line x1="23.5" y1="0" x2="23.5" y2="19" stroke="#c00000" stroke-width="1.2"/>
<line x1="810.3" y1="0" x2="810.3" y2="19" stroke="#c00000" stroke-width="1.2"/>
<line x1="844.0" y1="0" x2="844.0" y2="19" stroke="#c00000" stroke-width="1.2"/>
<line x1="879.0" y1="0" x2="879.0" y2="19" stroke="#c00000" stroke-width="1.2"/>
<line x1="914.0" y1="0" x2="914.0" y2="19" stroke="#c00000" stroke-width="1.2"/>
<line x1="949.0" y1="0" x2="949.0" y2="19" stroke="#c00000" stroke-width="1.2"/>
<line x1="984.4" y1="0" x2="984.4" y2="19" stroke="#c00000" stroke-width="1.2"/>
<line x1="1019.4" y1="0" x2="1019.4" y2="19" stroke="#c00000" stroke-width="1.2"/>
<line x1="1054.4" y1="0" x2="1054.4" y2="19" stroke="#c00000" stroke-width="1.2"/>
<line x1="1089.0" y1="0" x2="1089.0" y2="19" stroke="#c00000" stroke-width="1.2"/>
<rect x="5.5" y="3.5" width="11" height="10" rx="2" fill="none" stroke="#8c8c8c" stroke-width="1.3"/>
<rect x="12" y="5" width="3" height="7" fill="#8c8c8c"/>
<line x1="1075" y1="360.5" x2="1081" y2="360.5" stroke="#c00000" stroke-width="1"/>
<line x1="1075" y1="342.5" x2="1078" y2="342.5" stroke="#c00000" stroke-width="1"/>
<text x="1121" y="365" fill="#ff3c3c" font-size="12" text-anchor="end">26.00</text>
<line x1="1075" y1="324.5" x2="1081" y2="324.5" stroke="#c00000" stroke-width="1"/>
<line x1="1075" y1="307.5" x2="1078" y2="307.5" stroke="#c00000" stroke-width="1"/>
<text x="1121" y="329" fill="#ff3c3c" font-size="12" text-anchor="end">28.00</text>
<line x1="1075" y1="289.5" x2="1081" y2="289.5" stroke="#c00000" stroke-width="1"/>
<line x1="1075" y1="271.5" x2="1078" y2="271.5" stroke="#c00000" stroke-width="1"/>
<text x="1121" y="294" fill="#ff3c3c" font-size="12" text-anchor="end">30.00</text>
<line x1="1075" y1="254.5" x2="1081" y2="254.5" stroke="#c00000" stroke-width="1"/>
<line x1="1075" y1="236.5" x2="1078" y2="236.5" stroke="#c00000" stroke-width="1"/>
<text x="1121" y="259" fill="#ff3c3c" font-size="12" text-anchor="end">32.00</text>
<line x1="1075" y1="218.5" x2="1081" y2="218.5" stroke="#c00000" stroke-width="1"/>
<line x1="1075" y1="201.5" x2="1078" y2="201.5" stroke="#c00000" stroke-width="1"/>
<text x="1121" y="223" fill="#ff3c3c" font-size="12" text-anchor="end">34.00</text>
<line x1="1075" y1="183.5" x2="1081" y2="183.5" stroke="#c00000" stroke-width="1"/>
<line x1="1075" y1="165.5" x2="1078" y2="165.5" stroke="#c00000" stroke-width="1"/>
<text x="1121" y="188" fill="#ff3c3c" font-size="12" text-anchor="end">36.00</text>
<line x1="1075" y1="148.5" x2="1081" y2="148.5" stroke="#c00000" stroke-width="1"/>
<line x1="1075" y1="130.5" x2="1078" y2="130.5" stroke="#c00000" stroke-width="1"/>
<text x="1121" y="153" fill="#ff3c3c" font-size="12" text-anchor="end">38.00</text>
<line x1="1075" y1="112.5" x2="1081" y2="112.5" stroke="#c00000" stroke-width="1"/>
<line x1="1075" y1="95.5" x2="1078" y2="95.5" stroke="#c00000" stroke-width="1"/>
<text x="1121" y="117" fill="#ff3c3c" font-size="12" text-anchor="end">40.00</text>
<line x1="1075" y1="77.5" x2="1081" y2="77.5" stroke="#c00000" stroke-width="1"/>
<line x1="1075" y1="59.5" x2="1078" y2="59.5" stroke="#c00000" stroke-width="1"/>
<text x="1121" y="82" fill="#ff3c3c" font-size="12" text-anchor="end">42.00</text>
<line x1="1075" y1="42.5" x2="1081" y2="42.5" stroke="#c00000" stroke-width="1"/>
<text x="1121" y="47" fill="#ff3c3c" font-size="12" text-anchor="end">44.00</text>
<line x1="1075" y1="377.5" x2="1078" y2="377.5" stroke="#c00000" stroke-width="1"/>
<line x1="1075" y1="430.5" x2="1081" y2="430.5" stroke="#c00000" stroke-width="1"/>
<text x="1121" y="435" fill="#ff3c3c" font-size="12" text-anchor="end">6.00</text>
<line x1="1075" y1="465.5" x2="1081" y2="465.5" stroke="#c00000" stroke-width="1"/>
<text x="1121" y="470" fill="#ff3c3c" font-size="12" text-anchor="end">4.50</text>
<line x1="1075" y1="500.5" x2="1081" y2="500.5" stroke="#c00000" stroke-width="1"/>
<text x="1121" y="505" fill="#ff3c3c" font-size="12" text-anchor="end">3.00</text>
<line x1="1075" y1="535.5" x2="1081" y2="535.5" stroke="#c00000" stroke-width="1"/>
<text x="1121" y="540" fill="#ff3c3c" font-size="12" text-anchor="end">1.50</text>
<line x1="1075" y1="570.5" x2="1081" y2="570.5" stroke="#c00000" stroke-width="1"/>
<text x="1121" y="575" fill="#ff3c3c" font-size="12" text-anchor="end">0.00</text>
<line x1="1075" y1="413.5" x2="1078" y2="413.5" stroke="#c00000" stroke-width="1"/>
<line x1="1075" y1="448.5" x2="1078" y2="448.5" stroke="#c00000" stroke-width="1"/>
<line x1="1075" y1="483.5" x2="1078" y2="483.5" stroke="#c00000" stroke-width="1"/>
<line x1="1075" y1="518.5" x2="1078" y2="518.5" stroke="#c00000" stroke-width="1"/>
<line x1="1075" y1="553.5" x2="1078" y2="553.5" stroke="#c00000" stroke-width="1"/>
<line x1="1075" y1="587.5" x2="1078" y2="587.5" stroke="#c00000" stroke-width="1"/>
<rect x="1075.5" y="234.5" width="51" height="16" fill="#000080" stroke="#c00000" stroke-width="1"/>
<text x="1077" y="246" fill="#e0e0e0" font-size="11.5">32.21</text>
<polygon points="1047.5,24.2 1052.8,29.4 1047.5,34.6 1042.2,29.4" fill="none" stroke="#8c8c8c" stroke-width="1"/>
<rect x="1060.7" y="24.6" width="10.8" height="9.8" rx="2" fill="none" stroke="#8c8c8c" stroke-width="1.3"/>
<rect x="1067" y="26.2" width="2.8" height="6.6" fill="#8c8c8c"/>
<line x1="1127" y1="25.5" x2="1130" y2="25.5" stroke="#c00000" stroke-width="1"/>
<g fill="#a0a0a0"><rect x="1128" y="30" width="2" height="1"/><rect x="1128" y="33" width="2" height="1"/><rect x="1128" y="36" width="2" height="1"/></g>
<rect x="1128.5" y="59" width="1.5" height="1" fill="#a0a0a0"/>
<rect x="1128.5" y="78" width="1.5" height="1" fill="#a0a0a0"/>
<rect x="1128.5" y="96" width="1.5" height="1" fill="#a0a0a0"/>
<rect x="1128.5" y="116" width="1.5" height="1" fill="#a0a0a0"/>
<rect x="1128.5" y="135" width="1.5" height="1" fill="#a0a0a0"/>
<rect x="1128.5" y="153" width="1.5" height="1" fill="#a0a0a0"/>
<rect x="1128.5" y="172" width="1.5" height="1" fill="#a0a0a0"/>
<rect x="1128.5" y="191" width="1.5" height="1" fill="#a0a0a0"/>
<rect x="1128.5" y="210" width="1.5" height="1" fill="#a0a0a0"/>
<rect x="1128.5" y="228" width="1.5" height="1" fill="#a0a0a0"/>
<rect x="1128.5" y="247" width="1.5" height="1" fill="#a0a0a0"/>
<rect x="1128.5" y="266" width="1.5" height="1" fill="#a0a0a0"/>
<rect x="1128.5" y="285" width="1.5" height="1" fill="#a0a0a0"/>
<rect x="1128.5" y="313" width="1.5" height="1" fill="#a0a0a0"/>
<rect x="1128.5" y="327" width="1.5" height="1" fill="#a0a0a0"/>
<rect x="1128.5" y="338" width="1.5" height="1" fill="#a0a0a0"/>
<rect x="1128.5" y="343" width="1.5" height="1" fill="#a0a0a0"/>
<rect x="1128.5" y="369" width="1.5" height="1" fill="#a0a0a0"/>
<rect x="1128.5" y="410" width="1.5" height="1" fill="#a0a0a0"/>
<rect x="1128.5" y="431" width="1.5" height="1" fill="#a0a0a0"/>
<rect x="1128.5" y="448" width="1.5" height="1" fill="#a0a0a0"/>
<rect x="1128.5" y="466" width="1.5" height="1" fill="#a0a0a0"/>
<rect x="1128.5" y="500" width="1.5" height="1" fill="#a0a0a0"/>
<rect x="1128.5" y="535" width="1.5" height="1" fill="#a0a0a0"/>
<rect x="1128.5" y="550" width="1.5" height="1" fill="#a0a0a0"/>
<rect x="1128.5" y="570" width="1.5" height="1" fill="#a0a0a0"/>
<rect x="1128.5" y="587" width="1.5" height="1" fill="#a0a0a0"/>
<line x1="1126" y1="43.5" x2="1130" y2="43.5" stroke="#c00000" stroke-width="1.2"/>
<line x1="0" y1="630.5" x2="1130" y2="630.5" stroke="#c00000" stroke-width="1"/>
<line x1="0" y1="646.5" x2="1130" y2="646.5" stroke="#c00000" stroke-width="1"/>
<line x1="115.5" y1="630" x2="115.5" y2="650" stroke="#c00000" stroke-width="1"/>
<line x1="236.5" y1="630" x2="236.5" y2="650" stroke="#c00000" stroke-width="1"/>
<line x1="362.5" y1="630" x2="362.5" y2="650" stroke="#c00000" stroke-width="1"/>
<line x1="508.5" y1="630" x2="508.5" y2="650" stroke="#c00000" stroke-width="1"/>
<line x1="640.5" y1="630" x2="640.5" y2="650" stroke="#c00000" stroke-width="1"/>
<line x1="887.5" y1="630" x2="887.5" y2="650" stroke="#c00000" stroke-width="1"/>
<line x1="145" y1="630" x2="145" y2="634" stroke="#c00000" stroke-width="1"/>
<line x1="176" y1="630" x2="176" y2="634" stroke="#c00000" stroke-width="1"/>
<line x1="206.5" y1="630" x2="206.5" y2="634" stroke="#c00000" stroke-width="1"/>
<line x1="268.5" y1="630" x2="268.5" y2="634" stroke="#c00000" stroke-width="1"/>
<line x1="299.5" y1="630" x2="299.5" y2="634" stroke="#c00000" stroke-width="1"/>
<line x1="331.5" y1="630" x2="331.5" y2="634" stroke="#c00000" stroke-width="1"/>
<line x1="399.5" y1="630" x2="399.5" y2="634" stroke="#c00000" stroke-width="1"/>
<line x1="435.5" y1="630" x2="435.5" y2="634" stroke="#c00000" stroke-width="1"/>
<line x1="472" y1="630" x2="472" y2="634" stroke="#c00000" stroke-width="1"/>
<line x1="541.5" y1="630" x2="541.5" y2="634" stroke="#c00000" stroke-width="1"/>
<line x1="574.5" y1="630" x2="574.5" y2="634" stroke="#c00000" stroke-width="1"/>
<line x1="607.5" y1="630" x2="607.5" y2="634" stroke="#c00000" stroke-width="1"/>
<line x1="675.5" y1="630" x2="675.5" y2="634" stroke="#c00000" stroke-width="1"/>
<line x1="710.5" y1="630" x2="710.5" y2="634" stroke="#c00000" stroke-width="1"/>
<line x1="833.5" y1="630" x2="833.5" y2="634" stroke="#c00000" stroke-width="1"/>
<line x1="860.5" y1="630" x2="860.5" y2="634" stroke="#c00000" stroke-width="1"/>
<line x1="920" y1="630" x2="920" y2="634" stroke="#c00000" stroke-width="1"/>
<line x1="950.5" y1="630" x2="950.5" y2="634" stroke="#c00000" stroke-width="1"/>
<line x1="42.5" y1="646" x2="42.5" y2="650" stroke="#c00000" stroke-width="1"/>
<line x1="73.5" y1="646" x2="73.5" y2="650" stroke="#c00000" stroke-width="1"/>
<line x1="144" y1="646" x2="144" y2="650" stroke="#c00000" stroke-width="1"/>
<line x1="177" y1="646" x2="177" y2="650" stroke="#c00000" stroke-width="1"/>
<line x1="207.5" y1="646" x2="207.5" y2="650" stroke="#c00000" stroke-width="1"/>
<line x1="241" y1="646" x2="241" y2="650" stroke="#c00000" stroke-width="1"/>
<line x1="283" y1="646" x2="283" y2="650" stroke="#c00000" stroke-width="1"/>
<line x1="309" y1="646" x2="309" y2="650" stroke="#c00000" stroke-width="1"/>
<line x1="333" y1="646" x2="333" y2="650" stroke="#c00000" stroke-width="1"/>
<line x1="364" y1="646" x2="364" y2="650" stroke="#c00000" stroke-width="1"/>
<line x1="390.5" y1="646" x2="390.5" y2="650" stroke="#c00000" stroke-width="1"/>
<line x1="422.5" y1="646" x2="422.5" y2="650" stroke="#c00000" stroke-width="1"/>
<line x1="481" y1="646" x2="481" y2="650" stroke="#c00000" stroke-width="1"/>
<line x1="508.5" y1="646" x2="508.5" y2="650" stroke="#c00000" stroke-width="1"/>
<line x1="536.5" y1="646" x2="536.5" y2="650" stroke="#c00000" stroke-width="1"/>
<line x1="568.5" y1="646" x2="568.5" y2="650" stroke="#c00000" stroke-width="1"/>
<line x1="599" y1="646" x2="599" y2="650" stroke="#c00000" stroke-width="1"/>
<line x1="628" y1="646" x2="628" y2="650" stroke="#c00000" stroke-width="1"/>
<line x1="663" y1="646" x2="663" y2="650" stroke="#c00000" stroke-width="1"/>
<line x1="696.5" y1="646" x2="696.5" y2="650" stroke="#c00000" stroke-width="1"/>
<line x1="735" y1="646" x2="735" y2="650" stroke="#c00000" stroke-width="1"/>
<line x1="766.5" y1="646" x2="766.5" y2="650" stroke="#c00000" stroke-width="1"/>
<line x1="808" y1="646" x2="808" y2="650" stroke="#c00000" stroke-width="1"/>
<line x1="839.5" y1="646" x2="839.5" y2="650" stroke="#c00000" stroke-width="1"/>
<line x1="871.5" y1="646" x2="871.5" y2="650" stroke="#c00000" stroke-width="1"/>
<text x="116.5" y="642.5" fill="#ff3c3c" font-size="12">5</text>
<text x="237.5" y="642.5" fill="#ff3c3c" font-size="12">6</text>
<text x="363.5" y="642.5" fill="#ff3c3c" font-size="12">7</text>
<text x="509.5" y="642.5" fill="#ff3c3c" font-size="12">8</text>
<text x="641.5" y="642.5" fill="#ff3c3c" font-size="12">9</text>
<text x="888.5" y="642.5" fill="#ff3c3c" font-size="12">11</text>
<text x="3" y="642.5" fill="#ff3c3c" font-size="12">2025年</text>
<rect x="740.5" y="630.5" width="78" height="16" fill="#000080" stroke="#c00000" stroke-width="1"/>
<text x="742" y="642.3" fill="#e0e0e0" font-size="11.5">2025/09/23/二</text>
<text x="27.5" y="14" fill="#c8c8c8" font-size="12" >分时</text>
<text x="61" y="14" fill="#c8c8c8" font-size="12" >1分钟</text>
<text x="100" y="14" fill="#c8c8c8" font-size="12" >5分钟</text>
<text x="139" y="14" fill="#c8c8c8" font-size="12" >15分钟</text>
<text x="185" y="14" fill="#c8c8c8" font-size="12" >30分钟</text>
<text x="231" y="14" fill="#c8c8c8" font-size="12" >60分钟</text>
<text x="278" y="14" fill="#54fcfc" font-size="12" >日线</text>
<text x="312" y="14" fill="#c8c8c8" font-size="12" >周线</text>
<text x="345" y="14" fill="#c8c8c8" font-size="12" >月线</text>
<text x="378" y="14" fill="#c8c8c8" font-size="12" >多周期</text>
<text x="422.5" y="14" fill="#c8c8c8" font-size="12" >更多 〉</text>
<text x="815.5" y="14" fill="#c8c8c8" font-size="12" >复权</text>
<text x="849.5" y="14" fill="#c8c8c8" font-size="12" >叠加</text>
<text x="884" y="14" fill="#c8c8c8" font-size="12" >多股</text>
<text x="919" y="14" fill="#c8c8c8" font-size="12" >统计</text>
<text x="954" y="14" fill="#c8c8c8" font-size="12" >画线</text>
<text x="992" y="14" fill="#c8c8c8" font-size="12" >F10</text>
<text x="1024.5" y="14" fill="#c8c8c8" font-size="12" >标记</text>
<text x="1057" y="14" fill="#c8c8c8" font-size="12" >+自选</text>
<text x="1096" y="14" fill="#c8c8c8" font-size="12" >返回</text>
<text x="2.5" y="33.5" fill="#c8c8c8" font-size="12" >宸展光电(日线.前复权)</text>
<circle cx="134" cy="29" r="6.1" fill="#808080"/><polyline points="130.9,27.8 134,30.6 137.1,27.8" fill="none" stroke="#101010" stroke-width="1.1"/>
<circle cx="8" cy="405" r="6.1" fill="#808080"/><polyline points="4.9,403.8 8,406.6 11.1,403.8" fill="none" stroke="#101010" stroke-width="1.1"/>
<text x="17.5" y="410" fill="#c8c8c8" font-size="12" >股朋指标网</text>
<text x="83" y="410" fill="#e8e8e8" font-size="12" >A2: -1.34</text>
<text x="136.5" y="410" fill="#ffff00" font-size="12" >MID: -1.22</text>
<text x="196" y="410" fill="#ffff00" font-size="12" >: -1.22</text>
<text x="235" y="410" fill="#808080" font-size="12" >高: 5.56</text>
<text x="281.5" y="410" fill="#808080" font-size="12" >高中: 6.14</text>
<text x="340.5" y="410" fill="#00ff00" font-size="12" >低: -2.36</text>
<text x="392" y="410" fill="#00ff00" font-size="12" >低中: -1.65</text>
<text x="454.5" y="410" fill="#ff1a8c" font-size="12" >A2A: -1.34</text>
<text x="515.5" y="410" fill="#e8e8e8" font-size="12" >MID1: -1.44</text>
<text x="581" y="410" fill="#00ff00" font-size="12" >: -1.34</text>
<g fill="#d0d0d0"><rect x="8" y="649" width="1" height="1"/><rect x="10" y="649" width="1" height="1"/><rect x="12" y="649" width="1" height="1"/><rect x="19" y="649" width="1" height="1"/><rect x="51" y="649" width="1" height="1"/><rect x="828" y="649" width="1" height="1"/></g>
<g fill="#54fcfc"><rect x="845" y="648" width="1" height="2"/><rect x="847" y="649" width="3" height="1"/><rect x="856" y="649" width="6" height="1"/></g>
<rect x="971" y="600" width="159" height="50" fill="#3c3636"/>
<text x="1051" y="622" fill="#ffffff" font-size="18" font-weight="bold" text-anchor="middle">指标公式网</text>
<text x="1053" y="642" fill="#ffffff" font-size="16" text-anchor="middle">www.zbgs3.com</text>
</svg></body></html>
